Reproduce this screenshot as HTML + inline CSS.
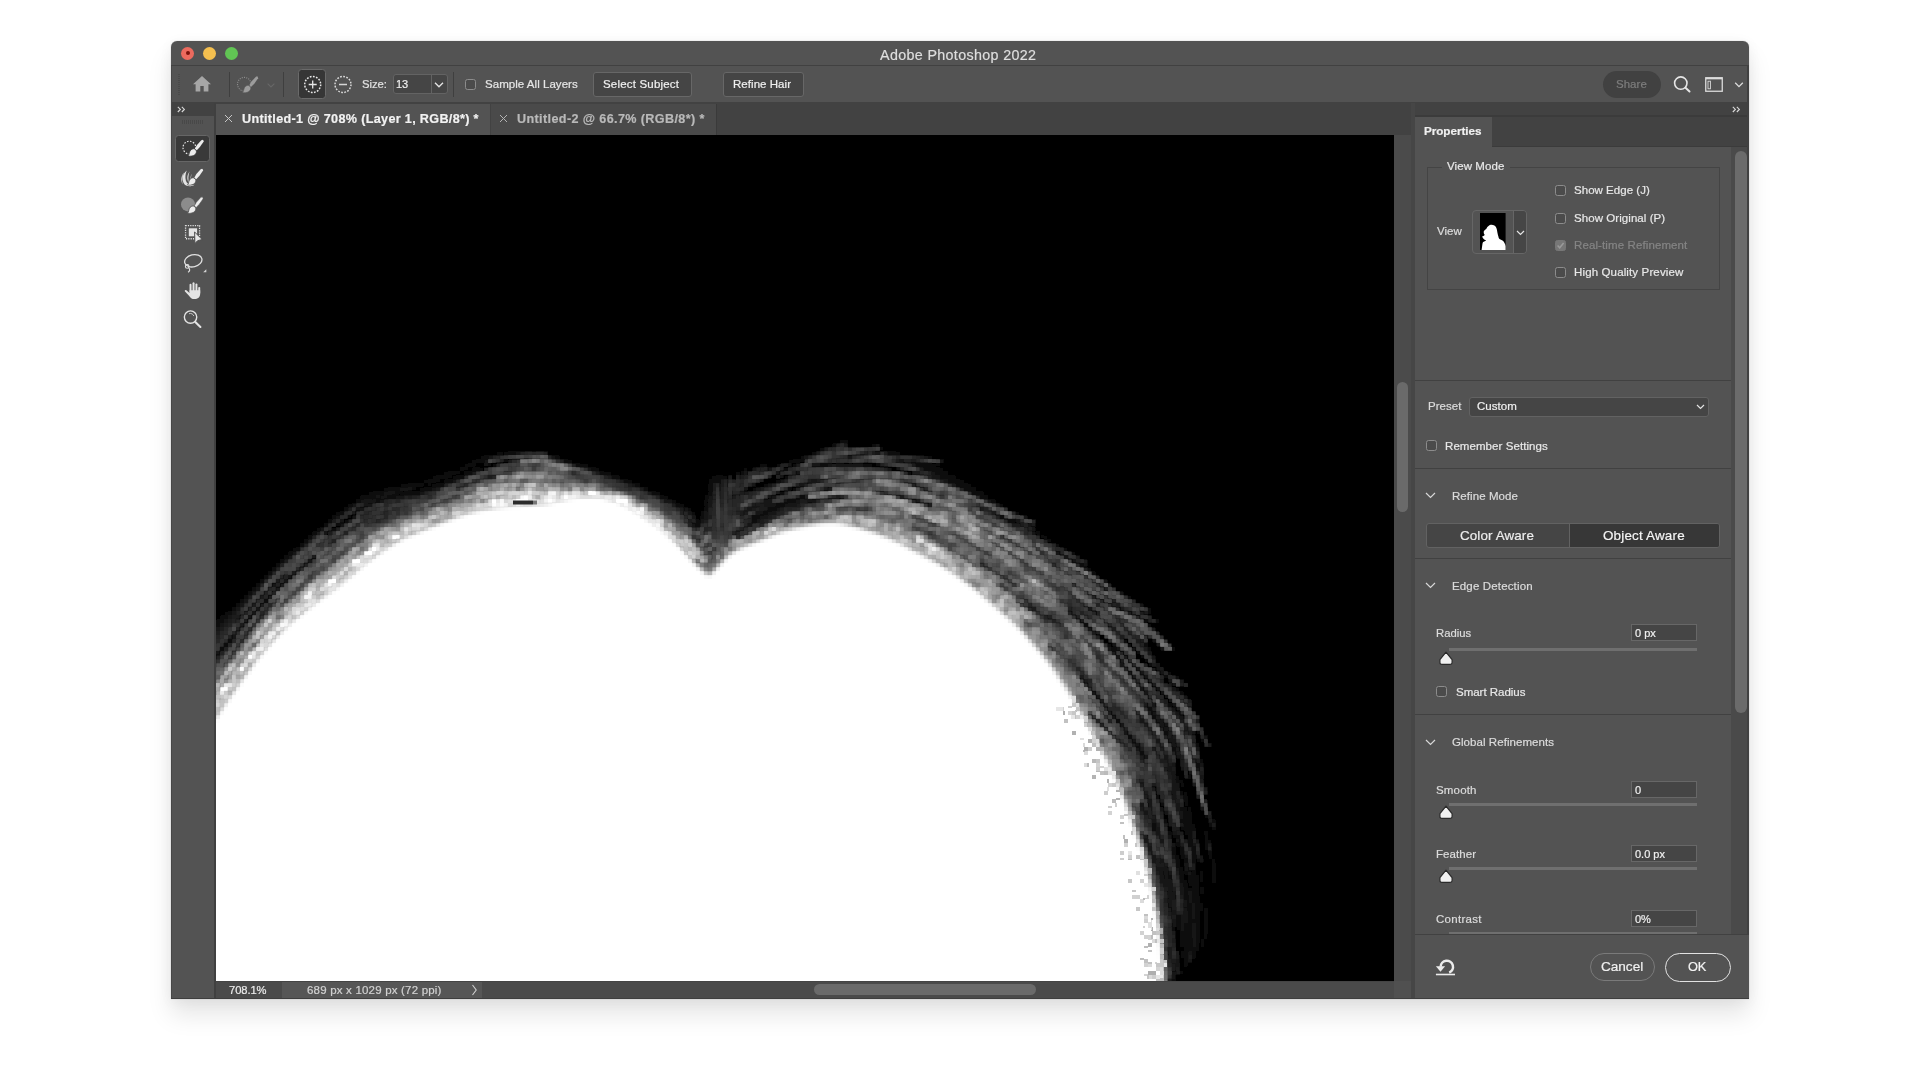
<!DOCTYPE html>
<html><head><meta charset="utf-8">
<style>
*{box-sizing:border-box;margin:0;padding:0}
html,body{width:1920px;height:1080px;overflow:hidden;background:#fff;font-family:"Liberation Sans",sans-serif;}
.a{position:absolute}
#win{position:absolute;left:0;top:0;width:1920px;height:1080px;clip-path:inset(41px 171px 81px 171px round 6px 6px 0 0);color:#e4e4e4;font-size:11px;}
#bg{position:absolute;left:171px;top:41px;width:1578px;height:958px;background:#535353}
.sep{position:absolute;width:1px;background:#3f3f3f}
.btn{position:absolute;background:#454545;border:1px solid #676767;border-radius:3px}
.cb{position:absolute;width:11px;height:11px;border:1px solid #8c8c8c;border-radius:2.5px;background:#4b4b4b}
svg{position:absolute;overflow:visible}
#shadow{position:absolute;left:171px;top:41px;width:1578px;height:958px;border-radius:6px 6px 0 0;box-shadow:0 16px 24px rgba(0,0,0,.10),0 2px 14px rgba(0,0,0,.05),0 0 1px rgba(0,0,0,.4);}
.t{position:absolute;white-space:nowrap;line-height:1;will-change:transform;-webkit-text-stroke:0.2px currentColor}
</style><style>#title{font-size:14.3px!important;letter-spacing:0.344px!important;left:880.4px!important}#size{font-size:11.3px!important;letter-spacing:-0.031px!important;left:362.4px!important}#sal{font-size:11.5px!important;letter-spacing:0.041px!important;left:485.0px!important}#ss{font-size:11.5px!important;letter-spacing:0.191px!important;left:603.4px!important}#rh{font-size:11.5px!important;letter-spacing:0.047px!important;left:733.4px!important}#share{font-size:11.5px!important;letter-spacing:0.028px!important;left:1615.8px!important}#tab1{font-size:12.6px!important;letter-spacing:0.338px!important;left:241.9px!important}#tab2{font-size:12.6px!important;letter-spacing:0.377px!important;left:517.1px!important}#props{font-size:11.7px!important;letter-spacing:-0.046px!important;left:1424.0px!important}#vm{font-size:11.5px!important;letter-spacing:0.077px!important;left:1447.1px!important}#view{font-size:11.5px!important;letter-spacing:0.027px!important;left:1437.4px!important}#c1{font-size:11.5px!important;letter-spacing:0.03px!important;left:1574.1px!important}#c2{font-size:11.5px!important;letter-spacing:0.067px!important;left:1574.1px!important}#c3{font-size:11.5px!important;letter-spacing:0.11px!important;left:1574.1px!important}#c4{font-size:11.5px!important;letter-spacing:0.135px!important;left:1574.1px!important}#preset{font-size:11.5px!important;letter-spacing:0.03px!important;left:1428.3px!important}#custom{font-size:11.5px!important;letter-spacing:0.035px!important;left:1476.8px!important}#rem{font-size:11.5px!important;letter-spacing:0.073px!important;left:1445.1px!important}#rm{font-size:11.5px!important;letter-spacing:0.068px!important;left:1452.0px!important}#ca{font-size:13.4px!important;letter-spacing:0.12px!important;left:1459.8px!important}#oa{font-size:13.4px!important;letter-spacing:0.199px!important;left:1603.4px!important}#ed{font-size:11.5px!important;letter-spacing:0.151px!important;left:1452.0px!important}#radius{font-size:11.3px!important;letter-spacing:0.006px!important;left:1435.7px!important}#sr{font-size:11.5px!important;letter-spacing:-0.016px!important;left:1455.9px!important}#gr{font-size:11.5px!important;letter-spacing:0.059px!important;left:1452.0px!important}#smooth{font-size:11.5px!important;letter-spacing:0.172px!important;left:1435.9px!important}#feather{font-size:11.5px!important;letter-spacing:0.06px!important;left:1435.9px!important}#contrast{font-size:11.5px!important;letter-spacing:0.276px!important;left:1435.9px!important}#cancel{font-size:13.6px!important;letter-spacing:-0.026px!important;left:1600.7px!important}#ok{font-size:12.8px!important;letter-spacing:-0.3px!important;left:1688.0px!important}#zoomv{font-size:11.2px!important;letter-spacing:-0.091px!important;left:229.4px!important}#docinfo{font-size:11.5px!important;letter-spacing:0.192px!important;left:306.7px!important}</style></head><body>
<div id="shadow"></div>
<div id="win">
<div id="bg"></div>
<div class="a" style="left:171px;top:65px;width:1578px;height:1px;background:#414141"></div>
<div class="a" style="left:181px;top:46.5px;width:13px;height:13px;border-radius:50%;background:#ec6a5e"></div>
<div class="a" style="left:185.5px;top:51px;width:4px;height:4px;border-radius:50%;background:#7a120c"></div>
<div class="a" style="left:203px;top:46.5px;width:13px;height:13px;border-radius:50%;background:#f4bf4f"></div>
<div class="a" style="left:225px;top:46.5px;width:13px;height:13px;border-radius:50%;background:#61c554"></div>
<div class="t" id="title" style="left:881px;top:48px;font-size:14px;color:#dedede;letter-spacing:0.2px">Adobe Photoshop 2022</div>


<!-- grip -->
<div class="a" style="left:177.5px;top:74px;width:2px;height:21px;background:repeating-linear-gradient(to bottom,#494949 0 1px,transparent 1px 2px)"></div>
<!-- home -->
<svg style="left:192px;top:75px" width="20" height="18" viewBox="0 0 20 18"><path d="M10 1 L1 9.2 H3.6 V16.4 H8.3 V11 H11.7 V16.4 H16.4 V9.2 H19 Z" fill="#a6a6a6"/></svg>
<div class="sep" style="left:229px;top:72px;height:25px"></div>
<!-- brush tool preset (dim) -->
<svg style="left:236px;top:74px" width="24" height="22" viewBox="0 0 24 22"><circle cx="8.3" cy="10.2" r="6.8" fill="none" stroke="#8e8e8e" stroke-width="1.1" stroke-dasharray="1.1 1.15"/><g transform="translate(-.6,.6)"><path d="M20.3 2.3 Q22.5 0.5 22.7 3.6 L18.9 9.1 L15.8 12.2 L13.9 10.7 L16 7 Z" fill="#9c9c9c"/><path d="M15.2 12.5 C16 14.5 14.6 17 11.6 17.8 C9.8 18.3 8 18.3 7.1 17.8 C8.4 16.7 8.2 14.8 9 13.2 C9.8 11.4 12 10.4 13.5 10.9 Z" fill="#9c9c9c" stroke="#535353" stroke-width=".6"/></g></svg>
<svg style="left:266.5px;top:83px" width="8" height="5" viewBox="0 0 8 5"><path d="M0.6 0.6 L4 4 L7.4 0.6" fill="none" stroke="#666" stroke-width="1.2"/></svg>
<div class="sep" style="left:283px;top:72px;height:25px"></div>
<!-- add button selected -->
<div class="a" style="left:298px;top:69px;width:28px;height:30px;background:#363636;border:1px solid #6a6a6a;border-radius:3.5px"></div>
<svg style="left:303px;top:75px" width="20" height="20" viewBox="0 0 20 20"><circle cx="9.7" cy="9.5" r="8" fill="none" stroke="#e8e8e8" stroke-width="1.5" stroke-dasharray="1.75 1.39"/><path d="M5.7 9.5 H13.7 M9.7 5.5 V13.5" stroke="#e6e6e6" stroke-width="1.3"/></svg>
<svg style="left:333px;top:75px" width="20" height="20" viewBox="0 0 20 20"><circle cx="10" cy="9.5" r="8" fill="none" stroke="#dadada" stroke-width="1.5" stroke-dasharray="1.75 1.39"/><path d="M6 9.5 H14" stroke="#d6d6d6" stroke-width="1.3"/></svg>
<div class="t" style="left:363px;top:79px;font-size:11px;color:#e2e2e2" id="size">Size:</div>
<div class="btn" style="left:392.5px;top:74px;width:55.5px;height:20px;border-color:#636363;background:#454545"></div>
<div class="a" style="left:431px;top:75px;width:1px;height:18px;background:#636363"></div>
<div class="t" style="left:396px;top:79px;font-size:11px;color:#efefef">13</div>
<svg style="left:434px;top:82px" width="10" height="6" viewBox="0 0 10 6"><path d="M1 0.8 L5 4.8 L9 0.8" fill="none" stroke="#e0e0e0" stroke-width="1.4"/></svg>
<div class="sep" style="left:453px;top:72px;height:25px"></div>
<div class="cb" style="left:465px;top:79px"></div>
<div class="t" id="sal" style="left:485px;top:79px;font-size:11px;color:#e6e6e6">Sample All Layers</div>
<div class="btn" style="left:593px;top:72px;width:99px;height:25px"></div>
<div class="t" id="ss" style="left:604px;top:79px;font-size:11px;color:#f0f0f0">Select Subject</div>
<div class="btn" style="left:723px;top:72px;width:81px;height:25px"></div>
<div class="t" id="rh" style="left:734px;top:79px;font-size:11px;color:#f0f0f0">Refine Hair</div>
<!-- right side -->
<div class="a" style="left:1602.5px;top:71px;width:58.5px;height:26.5px;border-radius:13.5px;background:#414141"></div>
<div class="t" id="share" style="left:1617px;top:79px;font-size:11px;color:#7d7d7d">Share</div>
<svg style="left:1673px;top:75px" width="20" height="20" viewBox="0 0 20 20"><circle cx="7.8" cy="8.1" r="6.2" fill="none" stroke="#e6e6e6" stroke-width="1.6"/><path d="M12.5 12.8 L16.5 16.5" stroke="#e6e6e6" stroke-width="2" stroke-linecap="round"/></svg>
<svg style="left:1705px;top:77px" width="18" height="15" viewBox="0 0 18 15"><rect x="0.75" y="0.75" width="16.5" height="13.5" fill="none" stroke="#dcdcdc" stroke-width="1.3"/><rect x="0.75" y="0.75" width="16.5" height="1.6" fill="#dcdcdc"/><rect x="3" y="4.2" width="2.4" height="7.6" fill="none" stroke="#dcdcdc" stroke-width="0.9"/></svg>
<svg style="left:1733.6px;top:82px" width="10" height="6" viewBox="0 0 10 6"><path d="M1.2 0.8 L5 4.6 L8.8 0.8" fill="none" stroke="#dcdcdc" stroke-width="1.3"/></svg>


<!-- below-options line -->
<div class="a" style="left:171px;top:102px;width:1578px;height:1px;background:#424242"></div>
<div class="a" style="left:171px;top:103px;width:43px;height:13px;background:#424242"></div>
<svg style="left:177px;top:106px" width="9" height="7" viewBox="0 0 9 7"><path d="M0.8 0.8 L3.4 3.4 L0.8 6 M4.8 0.8 L7.4 3.4 L4.8 6" fill="none" stroke="#dadada" stroke-width="1.1"/></svg>
<div class="a" style="left:213.5px;top:103px;width:2.5px;height:896px;background:#404040"></div><div class="a" style="left:171px;top:66px;width:1px;height:933px;background:#474747"></div>
<div class="a" style="left:182px;top:120px;width:22px;height:4px;background:repeating-linear-gradient(to right,#484848 0 1px,transparent 1px 2px)"></div>
<div class="a" style="left:175px;top:135px;width:35px;height:27px;background:#393939;border:1px solid #666;border-radius:3.5px"></div>
<!-- quick selection brush -->
<svg style="left:181px;top:138px" width="24" height="20" viewBox="0 0 24 20"><circle cx="8.4" cy="9.6" r="6.4" fill="none" stroke="#e6e6e6" stroke-width="1.2" stroke-dasharray="1.5 1.5"/><path d="M20.3 2.3 Q22.5 0.5 22.7 3.6 L18.9 9.1 L15.8 12.2 L13.9 10.7 L16 7 Z" fill="#ececec"/><path d="M15.2 12.5 C16 14.5 14.6 17 11.6 17.8 C9.8 18.3 8 18.3 7.1 17.8 C8.4 16.7 8.2 14.8 9 13.2 C9.8 11.4 12 10.4 13.5 10.9 Z" fill="#ececec" stroke="#393939" stroke-width=".7"/></svg>
<!-- refine edge brush -->
<svg style="left:180px;top:166px" width="24" height="22" viewBox="0 0 24 22"><path d="M6.8 4.6 C2.2 8 1.2 14 4.6 18.6 C7 20.8 11.4 20.8 14.6 18.8 C10.2 19.6 6.8 18 5.9 14.8 C4.9 11 5.5 7.6 6.8 4.6 Z M9.6 5.6 C6.8 9.2 6.6 13.6 9 17 C8 13.2 8.2 9.4 9.6 5.6 Z M4 6.6 C1.2 10 .4 14.6 2.6 18.4 C1.6 14.2 2.2 10.2 4 6.6 Z M11.8 7.6 C10.4 10 10.2 12.6 11.2 15 C10.8 12.4 11 10 11.8 7.6 Z" fill="#e2e2e2"/><g transform="translate(.4,1)"><path d="M20.3 2.3 Q22.5 0.5 22.7 3.6 L18.9 9.1 L15.8 12.2 L13.9 10.7 L16 7 Z" fill="#ececec"/><path d="M15.2 12.5 C16 14.5 14.6 17 11.6 17.8 C9.8 18.3 8 18.3 7.1 17.8 C8.4 16.7 8.2 14.8 9 13.2 C9.8 11.4 12 10.4 13.5 10.9 Z" fill="#ececec" stroke="#535353" stroke-width=".8"/></g></svg>
<!-- brush tool -->
<svg style="left:180px;top:194px" width="24" height="22" viewBox="0 0 24 22"><circle cx="8" cy="10.4" r="7" fill="#8c8c8c"/><g transform="translate(.4,1.2)"><path d="M20.3 2.3 Q22.5 0.5 22.7 3.6 L18.9 9.1 L15.8 12.2 L13.9 10.7 L16 7 Z" fill="#ececec" stroke="#535353" stroke-width=".5"/><path d="M15.2 12.5 C16 14.5 14.6 17 11.6 17.8 C9.8 18.3 8 18.3 7.1 17.8 C8.4 16.7 8.2 14.8 9 13.2 C9.8 11.4 12 10.4 13.5 10.9 Z" fill="#ececec" stroke="#535353" stroke-width=".9"/></g></svg>
<!-- object selection -->
<svg style="left:184px;top:224px" width="20" height="20" viewBox="0 0 20 20"><rect x="1.55" y="1.55" width="14" height="13.2" fill="none" stroke="#e0e0e0" stroke-width="1.3" stroke-dasharray="1.2 1.13"/><rect x="4.8" y="4.3" width="8.3" height="8" fill="#e4e4e4"/><path d="M10.6 8 L10.9 19.6 L13.6 16.7 L18.2 15.5 Z" fill="#e8e8e8" stroke="#505050" stroke-width="1"/></svg>
<!-- lasso -->
<svg style="left:182px;top:252px" width="26" height="24" viewBox="0 0 26 24"><ellipse cx="11.3" cy="8.8" rx="8.8" ry="6" transform="rotate(-14 11.3 8.8)" fill="none" stroke="#e0e0e0" stroke-width="1.3"/><circle cx="5.2" cy="14.4" r="1.8" fill="none" stroke="#e0e0e0" stroke-width="1.1"/><path d="M6.6 15.6 C8.2 17 8 19.4 6 20.2" fill="none" stroke="#e0e0e0" stroke-width="1.2"/><path d="M24.3 17.2 V20.3 H21.2 Z" fill="#d4d4d4"/></svg>
<!-- hand -->
<svg style="left:184px;top:281px" width="18" height="19" viewBox="0 0 18 19"><g fill="#e4e4e4"><rect x="5.55" y="2.7" width="1.95" height="9" rx=".95"/><rect x="8.55" y="1.3" width="1.95" height="10" rx=".95"/><rect x="11.45" y="2.5" width="1.95" height="9" rx=".95"/><rect x="14.25" y="5.9" width="1.95" height="7" rx=".95"/><path d="M5.55 9.3 H16.2 V12.4 C16.2 16 13.8 18.1 10.6 18.1 C7.8 18.1 6.2 16.7 5 14.7 L1 10.5 C0.2 9.5 1.4 8.5 2.4 9.3 L5.55 11.9 Z"/></g></svg>
<!-- zoom -->
<svg style="left:182px;top:308px" width="22" height="22" viewBox="0 0 22 22"><circle cx="8.55" cy="9.05" r="6.2" fill="none" stroke="#e4e4e4" stroke-width="1.4"/><path d="M13.3 14 L18.4 19" stroke="#e4e4e4" stroke-width="2.1" stroke-linecap="round"/><path d="M7 5.7 C9.4 5 11.2 6.2 11.8 8" fill="none" stroke="#c4c4c4" stroke-width="1"/></svg>
<div class="a" style="left:216px;top:103px;width:1196px;height:32px;background:#424242"></div>
<div class="a" style="left:216px;top:104px;width:274px;height:31px;background:#535353"></div>
<div class="a" style="left:491px;top:104px;width:225px;height:31px;background:#4a4a4a"></div>
<div class="a" style="left:716px;top:104px;width:1px;height:31px;background:#3a3a3a"></div>
<svg style="left:224px;top:114px" width="9" height="9" viewBox="0 0 9 9"><path d="M1 1 L8 8 M8 1 L1 8" stroke="#c8c8c8" stroke-width="1"/></svg>
<div class="t" id="tab1" style="left:242px;top:113px;font-size:12px;font-weight:bold;color:#f2f2f2">Untitled-1 @ 708% (Layer 1, RGB/8*) *</div>
<svg style="left:499px;top:114px" width="9" height="9" viewBox="0 0 9 9"><path d="M1 1 L8 8 M8 1 L1 8" stroke="#b4b4b4" stroke-width="1"/></svg>
<div class="t" id="tab2" style="left:517px;top:113px;font-size:12px;font-weight:bold;color:#b9b9b9">Untitled-2 @ 66.7% (RGB/8*) *</div>

<svg style="left:216px;top:135px;overflow:hidden" width="1178" height="846" viewBox="216 135 1178 846">
<defs><filter id="b3" x="-5%" y="-5%" width="110%" height="110%"><feGaussianBlur stdDeviation="3"/></filter><filter id="b1" x="-5%" y="-5%" width="110%" height="110%"><feGaussianBlur stdDeviation="1.2"/></filter><filter id="b2" x="-5%" y="-5%" width="110%" height="110%"><feGaussianBlur stdDeviation="2.2"/></filter>
<filter id="nz" x="0" y="0" width="100%" height="100%" color-interpolation-filters="sRGB"><feTurbulence type="fractalNoise" baseFrequency="0.095" numOctaves="2" seed="5"/><feColorMatrix type="matrix" values="1 0 0 0 0 1 0 0 0 0 1 0 0 0 0 0 0 0 0 1" result="n"/><feComposite in="SourceGraphic" in2="n" operator="arithmetic" k1="1.0" k2="0.5" k3="0" k4="0"/></filter>
<filter id="px" x="0" y="0" width="100%" height="100%" filterUnits="objectBoundingBox" primitiveUnits="userSpaceOnUse"><feFlood x="217" y="136" width="2" height="2"/><feComposite width="4" height="4"/><feTile result="t"/><feComposite in="SourceGraphic" in2="t" operator="in"/><feMorphology operator="dilate" radius="1"/></filter></defs>
<rect x="216" y="135" width="1178" height="846" fill="#000"/>
<g filter="url(#px)"><rect x="216" y="135" width="1178" height="846" fill="#000"/>
<g filter="url(#nz)"><rect x="216" y="135" width="1178" height="846" fill="#000"/>
<g filter="url(#b3)">
<path d="M453 478L468 471L468 464L453 471ZM468 471L483 464L483 457L468 464ZM483 464L498 461L498 453L483 457ZM581 470L592 474L593 471L583 466ZM701 531L706 506L707 496L702 525ZM706 506L711 482L711 466L707 496ZM711 482L717 480L717 465L711 466ZM717 480L722 478L722 464L717 465ZM722 489L728 486L729 473L722 474ZM728 486L735 484L735 471L729 473ZM735 484L745 480L745 467L735 471ZM745 480L756 476L755 464L745 467ZM756 476L769 473L767 461L755 464ZM769 473L782 469L779 458L767 461ZM782 469L799 466L798 455L779 458ZM799 466L817 463L816 452L798 455ZM817 463L834 462L833 450L816 452ZM1088 586L1100 597L1113 589L1101 578ZM1100 597L1112 608L1125 600L1113 589ZM1112 608L1122 619L1136 610L1125 600ZM1122 619L1133 630L1146 621L1136 610ZM1133 630L1143 648L1156 639L1146 621ZM1143 648L1153 665L1166 657L1156 639ZM1153 665L1163 680L1176 670L1166 657ZM1163 680L1173 694L1186 683L1176 670ZM1173 694L1180 708L1193 696L1186 683ZM1180 708L1187 722L1199 709L1193 696ZM1187 722L1190 742L1201 728L1199 709ZM1190 742L1192 762L1203 747L1201 728ZM1192 762L1196 785L1206 771L1203 747ZM1189 796L1193 819L1202 806L1198 782ZM1193 819L1197 842L1206 829L1202 806ZM1197 842L1201 865L1210 853L1206 829ZM1201 865L1201 886L1209 874L1210 853ZM1201 886L1200 907L1209 896L1209 874ZM1200 907L1198 931L1205 922L1209 896ZM1198 931L1195 955L1202 948L1205 922Z" fill="#060606"/>
<path d="M186 666L201 651L201 636L186 650ZM201 651L216 636L216 622L201 636ZM216 636L231 621L231 609L216 622ZM231 621L246 606L246 595L231 609ZM246 606L260 591L260 580L246 595ZM260 591L275 576L275 566L260 580ZM275 576L290 563L290 553L275 566ZM290 563L305 550L305 540L290 553ZM305 550L320 538L320 528L305 540ZM320 538L335 526L335 515L320 528ZM335 526L350 515L350 505L335 515ZM350 515L364 505L364 495L350 505ZM364 505L379 500L379 491L364 495ZM379 500L394 495L394 487L379 491ZM394 495L408 492L408 485L394 487ZM408 492L423 490L423 483L408 485ZM423 490L438 484L438 477L423 483ZM438 484L453 478L453 471L438 477ZM592 474L607 479L608 476L593 471ZM607 479L622 484L623 482L608 476ZM622 484L638 491L640 488L623 482ZM638 491L654 498L656 495L640 488ZM654 498L670 506L672 503L656 495ZM670 506L686 514L688 510L672 503ZM686 514L694 522L695 518L688 510ZM694 522L701 531L702 525L695 518ZM700 535L706 514L706 504L701 530ZM706 514L711 494L711 478L706 504ZM711 494L716 491L717 476L711 478ZM716 491L722 489L722 474L717 476ZM834 462L851 460L850 448L833 450ZM851 460L870 462L870 449L850 448ZM870 462L889 463L890 450L870 449ZM889 463L909 470L910 457L890 450ZM909 470L928 477L931 463L910 457ZM928 477L949 489L953 476L931 463ZM949 489L970 500L975 488L953 476ZM970 500L991 515L998 503L975 488ZM991 515L1012 529L1020 518L998 503ZM1012 529L1034 545L1042 534L1020 518ZM1034 545L1055 560L1064 551L1042 534ZM1055 560L1071 573L1083 564L1064 551ZM1071 573L1088 586L1101 578L1083 564ZM1177 731L1181 752L1192 738L1190 719ZM1181 752L1185 773L1195 758L1192 738ZM1185 773L1189 796L1198 782L1195 758ZM1174 817L1179 839L1188 826L1184 803ZM1181 807L1186 829L1195 816L1191 793ZM1171 849L1175 871L1185 858L1181 836ZM1179 839L1183 861L1192 849L1188 826ZM1186 829L1190 852L1199 839L1195 816ZM1175 871L1179 892L1189 880L1185 858ZM1183 861L1187 883L1196 871L1192 849ZM1190 852L1194 874L1203 862L1199 839ZM1179 892L1180 913L1189 901L1189 880ZM1187 883L1187 904L1196 892L1196 871ZM1194 874L1194 895L1203 883L1203 862ZM1180 913L1181 933L1190 922L1189 901ZM1187 904L1188 925L1196 913L1196 892ZM1194 895L1194 916L1202 905L1203 883ZM1181 933L1180 952L1188 943L1190 922ZM1188 925L1186 945L1194 936L1196 913ZM1194 916L1192 938L1199 929L1202 905ZM1180 952L1180 970L1186 964L1188 943ZM1186 945L1185 965L1191 959L1194 936ZM1192 938L1190 960L1196 954L1199 929Z" fill="#0c0c0c"/>
<path d="M722 499L728 496L728 483L722 485ZM728 496L734 493L735 481L728 483ZM734 493L746 489L745 477L735 481ZM746 489L757 485L756 473L745 477ZM757 485L770 481L768 470L756 473ZM770 481L783 478L781 467L768 470ZM783 478L801 475L799 464L781 467ZM801 475L819 471L817 461L799 464ZM819 471L835 471L834 459L817 461ZM1090 603L1101 614L1115 606L1103 595ZM1101 614L1112 626L1126 617L1115 606ZM1112 626L1122 637L1136 628L1126 617ZM1122 637L1132 654L1146 646L1136 628ZM1132 654L1142 672L1156 663L1146 646ZM1142 672L1152 687L1166 677L1156 663ZM1152 687L1162 702L1176 691L1166 677ZM1162 702L1170 717L1183 705L1176 691ZM1170 717L1177 731L1190 719L1183 705ZM1177 784L1181 807L1191 793L1187 770ZM1159 838L1164 859L1174 846L1169 825ZM1166 828L1171 849L1181 836L1176 814ZM1157 869L1161 890L1170 877L1166 856ZM1164 859L1168 880L1178 868L1174 846ZM1161 890L1165 910L1174 898L1170 877ZM1168 880L1172 901L1182 889L1178 868ZM1165 910L1167 931L1176 919L1174 898ZM1172 901L1173 922L1182 910L1182 889ZM1167 931L1168 951L1177 939L1176 919ZM1173 922L1175 942L1183 931L1182 910ZM1168 951L1169 966L1176 957L1177 939ZM1175 942L1175 959L1182 950L1183 931ZM1169 966L1169 981L1176 974L1176 957ZM1175 959L1174 976L1181 969L1182 950Z" fill="#121212"/>
<path d="M705 523L710 506L711 490L706 512ZM710 506L716 502L716 488L711 490ZM716 502L722 499L722 485L716 488ZM835 471L851 470L850 457L834 459ZM1078 592L1090 603L1103 595L1091 584ZM1172 763L1177 784L1187 770L1184 749ZM1161 806L1166 828L1176 814L1171 792ZM1169 795L1174 817L1184 803L1179 781ZM1151 849L1157 869L1166 856L1161 835Z" fill="#181818"/>
<path d="M700 540L705 523L706 512L701 534ZM728 506L734 503L735 490L728 493ZM734 503L746 499L746 486L735 490ZM746 499L758 494L757 482L746 486ZM758 494L771 490L770 479L757 482ZM771 490L785 486L783 475L770 479ZM785 486L802 483L800 472L783 475ZM802 483L820 480L818 469L800 472ZM851 470L870 472L870 459L850 457ZM1063 580L1078 592L1091 584L1074 571ZM1091 621L1101 632L1115 624L1105 612ZM1101 632L1112 644L1126 635L1115 624ZM1112 644L1122 661L1136 652L1126 635ZM1122 661L1132 678L1146 670L1136 652ZM1132 678L1142 694L1156 685L1146 670ZM1142 694L1152 710L1166 699L1156 685ZM1152 710L1160 725L1173 714L1166 699ZM1160 725L1168 741L1180 728L1173 714ZM1168 741L1172 763L1184 749L1180 728ZM1164 773L1169 795L1179 781L1175 759ZM1153 818L1159 838L1169 825L1164 803Z" fill="#1e1e1e"/>
<path d="M186 678L201 662L201 647L186 662ZM201 662L216 646L216 633L201 647ZM216 646L231 630L231 618L216 633ZM231 630L246 614L246 603L231 618ZM246 614L260 599L260 588L246 603ZM260 599L275 584L275 573L260 588ZM275 584L290 570L290 560L275 573ZM290 570L305 557L305 548L290 560ZM305 557L320 546L320 535L305 548ZM320 546L335 534L335 523L320 535ZM335 534L350 523L350 513L335 523ZM350 523L364 512L364 503L350 513ZM364 512L379 506L379 498L364 503ZM379 506L394 501L394 493L379 498ZM394 501L408 498L408 491L394 493ZM408 498L423 495L423 488L408 491ZM423 495L438 489L438 482L423 488ZM438 489L453 483L453 476L438 482ZM453 483L468 476L468 469L453 476ZM692 526L700 535L701 530L694 521ZM716 514L722 510L722 496L716 499ZM722 510L728 506L728 493L722 496ZM728 517L734 513L734 500L728 503ZM734 513L747 508L746 496L734 500ZM747 508L759 503L758 491L746 496ZM759 503L773 499L771 487L758 491ZM773 499L786 495L784 484L771 487ZM786 495L804 491L802 480L784 484ZM804 491L821 488L819 477L802 480ZM820 480L836 479L835 468L818 469ZM870 472L889 474L890 460L870 459ZM889 474L907 481L909 467L890 460ZM907 481L926 488L929 474L909 467ZM926 488L946 499L950 486L929 474ZM946 499L966 510L971 497L950 486ZM966 510L987 524L993 512L971 497ZM987 524L1007 537L1014 527L993 512ZM1007 537L1027 553L1036 542L1014 527ZM1027 553L1047 568L1057 558L1036 542ZM1047 568L1063 580L1074 571L1057 558ZM1080 609L1091 621L1105 612L1093 601ZM1081 627L1091 639L1105 630L1094 619ZM1091 639L1101 651L1115 642L1105 630ZM1101 651L1111 668L1125 659L1115 642ZM1111 668L1121 685L1135 676L1125 659ZM1121 685L1132 702L1145 692L1135 676ZM1132 702L1142 718L1155 707L1145 692ZM1142 718L1150 734L1163 723L1155 707ZM1150 734L1158 751L1171 738L1163 723ZM1158 751L1164 773L1175 759L1171 738ZM1146 794L1153 818L1164 803L1158 780ZM1155 783L1161 806L1171 792L1166 770ZM1146 829L1151 849L1161 835L1156 814Z" fill="#242424"/>
<path d="M186 690L201 673L201 658L186 674ZM201 673L216 656L216 643L201 658ZM216 656L231 639L231 627L216 643ZM231 639L246 622L246 612L231 627ZM246 622L260 607L260 596L246 612ZM260 607L275 591L275 581L260 596ZM275 591L290 578L290 568L275 581ZM290 578L305 565L305 555L290 568ZM305 565L320 553L320 543L305 555ZM320 553L335 542L335 531L320 543ZM335 542L350 531L350 521L335 531ZM350 531L364 519L364 510L350 521ZM364 519L379 513L379 504L364 510ZM379 513L394 507L394 499L379 504ZM394 507L408 503L408 496L394 499ZM408 503L423 500L423 493L408 496ZM423 500L438 494L438 487L423 493ZM438 494L453 488L453 481L438 487ZM699 544L705 531L705 520L700 538ZM704 539L710 529L710 514L705 528ZM705 531L710 517L711 502L705 520ZM710 529L716 525L716 510L710 514ZM710 517L716 514L716 499L711 502ZM716 525L721 521L722 507L716 510ZM721 531L728 527L728 514L722 517ZM721 521L728 517L728 503L722 507ZM728 527L734 522L734 510L728 514ZM734 522L747 517L746 505L734 510ZM747 517L760 512L759 500L746 505ZM760 512L774 508L772 496L759 500ZM774 508L788 503L786 492L772 496ZM788 503L805 500L803 489L786 492ZM805 500L822 496L821 485L803 489ZM821 488L837 488L836 477L819 477ZM1070 615L1081 627L1094 619L1083 607ZM1149 760L1155 783L1166 770L1161 748ZM1138 804L1146 829L1156 814L1149 791Z" fill="#2a2a2a"/>
<path d="M453 488L468 482L468 475L453 481ZM468 476L483 470L483 462L468 469ZM606 481L621 486L622 483L607 478ZM621 486L637 493L638 490L622 483ZM637 493L653 500L654 497L638 490ZM653 500L669 509L670 505L654 497ZM669 509L684 517L687 513L670 505ZM684 517L692 526L694 521L687 513ZM699 548L704 539L705 528L700 543ZM704 547L710 541L710 526L705 536ZM710 541L716 536L716 521L710 526ZM716 536L721 531L722 517L716 521ZM721 542L727 537L728 524L721 528ZM727 537L733 532L734 519L728 524ZM733 532L747 527L747 514L734 519ZM747 527L761 521L760 509L747 514ZM761 521L775 516L773 505L760 509ZM775 516L789 511L787 500L773 505ZM789 511L806 508L805 497L787 500ZM806 508L824 505L822 494L805 497ZM822 496L838 497L837 486L821 485ZM836 479L852 479L851 467L835 468ZM1068 598L1080 609L1093 601L1081 590ZM1070 633L1081 646L1094 637L1084 625ZM1081 646L1091 658L1105 649L1094 637ZM1091 658L1101 675L1115 666L1105 649ZM1101 675L1111 691L1125 683L1115 666ZM1111 691L1121 709L1135 699L1125 683ZM1121 709L1131 726L1145 716L1135 699ZM1131 726L1140 743L1153 732L1145 716ZM1140 743L1149 760L1161 748L1153 732ZM1139 770L1146 794L1158 780L1152 757Z" fill="#303030"/>
<path d="M186 702L201 684L201 670L186 686ZM201 684L216 666L216 653L201 670ZM216 666L231 649L231 636L216 653ZM231 649L246 631L246 620L231 636ZM246 631L260 615L260 604L246 620ZM260 615L275 599L275 589L260 604ZM275 599L290 586L290 576L275 589ZM290 586L305 572L305 563L290 576ZM305 572L320 561L320 551L305 563ZM320 561L335 550L335 539L320 551ZM335 550L350 538L350 528L335 539ZM350 538L364 527L364 517L350 528ZM364 527L379 520L379 511L364 517ZM379 520L394 513L394 505L379 511ZM394 513L408 509L408 502L394 505ZM408 509L423 505L423 498L408 502ZM423 505L438 499L438 492L423 498ZM438 499L453 493L453 486L438 492ZM453 493L468 487L468 480L453 486ZM468 482L483 475L483 468L468 475ZM483 470L498 467L498 459L483 462ZM591 477L606 481L607 478L592 473ZM691 530L700 540L701 534L693 525ZM698 553L704 547L705 536L699 547ZM704 555L709 553L710 537L704 544ZM709 553L715 548L716 533L710 537ZM715 548L721 542L721 528L716 533ZM824 505L839 506L837 494L822 494ZM837 488L853 489L852 476L836 477ZM1058 604L1070 615L1083 607L1071 596ZM1059 622L1070 633L1084 625L1073 614ZM1060 639L1070 652L1084 644L1074 631ZM1070 652L1080 665L1094 656L1084 644ZM1080 665L1090 682L1104 673L1094 656ZM1090 682L1100 698L1114 689L1104 673ZM1100 698L1111 716L1124 707L1114 689ZM1111 716L1121 734L1135 724L1124 707ZM1121 734L1130 752L1143 740L1135 724ZM1130 752L1139 770L1152 757L1143 740ZM1130 780L1138 804L1149 791L1142 767Z" fill="#363636"/>
<path d="M186 714L201 696L201 681L186 698ZM201 696L216 677L216 663L201 681ZM216 677L231 658L231 646L216 663ZM231 658L246 639L246 628L231 646ZM246 639L260 623L260 612L246 628ZM260 623L275 607L275 596L260 612ZM275 607L290 593L290 583L275 596ZM290 593L305 580L305 570L290 583ZM305 580L320 569L320 559L305 570ZM320 569L335 558L335 547L320 559ZM335 558L350 546L350 536L335 547ZM350 546L364 534L364 524L350 536ZM364 534L379 526L379 518L364 524ZM379 526L394 518L394 511L379 518ZM394 518L408 514L408 507L394 511ZM408 514L423 510L423 503L408 507ZM423 510L438 504L438 497L423 503ZM438 504L453 498L453 491L438 497ZM580 474L591 477L592 473L581 469ZM698 557L704 555L704 544L699 551ZM703 563L709 565L710 549L704 553ZM709 565L715 559L715 544L710 549ZM715 559L721 553L721 539L715 544ZM721 553L727 547L727 534L721 539ZM727 547L733 542L734 529L727 534ZM733 542L748 536L747 524L734 529ZM748 536L762 530L761 518L747 524ZM762 530L776 525L775 514L761 518ZM776 525L791 520L789 509L775 514ZM791 520L808 516L806 505L789 509ZM808 516L825 513L823 502L806 505ZM838 497L853 498L852 486L837 486ZM852 479L870 482L870 469L851 467ZM1054 587L1068 598L1081 590L1065 578ZM1048 610L1059 622L1073 614L1061 602ZM1049 628L1060 639L1074 631L1063 620ZM1050 646L1060 659L1073 650L1063 637ZM1060 659L1070 672L1084 663L1073 650ZM1070 672L1080 688L1094 679L1084 663ZM1080 688L1090 705L1104 696L1094 679ZM1090 705L1100 723L1114 714L1104 696ZM1100 723L1111 742L1124 732L1114 714ZM1111 742L1120 761L1133 749L1124 732ZM1120 761L1130 780L1142 767L1133 749ZM1150 880L1154 900L1163 887L1159 866ZM1154 900L1158 919L1167 908L1163 887ZM1158 919L1160 939L1169 928L1167 908ZM1160 939L1162 959L1170 948L1169 928ZM1162 959L1163 973L1171 964L1170 948ZM1163 973L1164 986L1171 979L1171 964Z" fill="#3c3c3c"/>
<path d="M453 498L468 492L468 485L453 491ZM468 487L483 481L483 473L468 480ZM483 475L498 472L498 465L483 468ZM498 467L512 464L512 456L498 459ZM568 471L580 474L581 469L571 466ZM590 479L605 483L606 480L591 476ZM605 483L620 488L621 485L606 480ZM620 488L636 495L637 492L621 485ZM636 495L651 502L653 499L637 492ZM651 502L667 511L669 508L653 499ZM667 511L683 520L685 516L669 508ZM683 520L691 530L693 525L685 516ZM690 534L699 544L700 538L692 529ZM697 561L703 563L704 553L698 556ZM825 513L840 515L838 503L823 502ZM839 506L854 508L853 495L837 494ZM853 489L870 492L870 479L852 476ZM1045 593L1058 604L1071 596L1057 585ZM1039 634L1050 646L1063 637L1052 626Z" fill="#424242"/>
<path d="M512 464L526 463L526 456L512 456ZM526 463L540 463L540 455L526 456ZM540 463L554 467L555 460L540 455ZM554 467L568 471L571 466L555 460ZM578 477L590 479L591 476L580 473ZM853 498L870 502L870 489L852 486ZM870 482L888 484L889 470L870 469ZM1040 575L1054 587L1065 578L1049 566ZM1036 600L1048 610L1061 602L1048 591ZM1038 616L1049 628L1063 620L1051 608ZM1144 860L1150 880L1159 866L1154 846Z" fill="#484848"/>
<path d="M468 492L483 486L483 479L468 485ZM483 481L498 478L498 471L483 473ZM498 472L512 470L512 462L498 465ZM566 475L578 477L580 473L569 470ZM589 482L604 485L605 483L591 478ZM604 485L619 489L620 487L605 483ZM619 489L635 497L636 494L620 487ZM635 497L650 504L652 502L636 494ZM650 504L666 514L668 510L652 502ZM666 514L681 523L683 519L668 510ZM681 523L690 534L692 529L683 519ZM689 537L699 548L700 543L691 532ZM840 515L854 517L854 505L838 503ZM854 508L870 512L870 499L853 495ZM870 492L887 495L888 481L870 479ZM888 484L906 491L908 478L889 470ZM906 491L924 499L927 485L908 478ZM924 499L943 509L947 496L927 485ZM943 509L963 519L968 507L947 496ZM963 519L982 532L988 521L968 507ZM982 532L1001 546L1009 535L988 521ZM1001 546L1020 561L1029 550L1009 535ZM1020 561L1040 575L1049 566L1029 550ZM1032 583L1045 593L1057 585L1042 573ZM1028 622L1039 634L1052 626L1041 614Z" fill="#4e4e4e"/>
<path d="M512 470L526 469L526 461L512 462ZM526 469L540 469L540 461L526 461ZM540 469L553 472L554 465L540 461ZM553 472L566 475L569 470L554 465ZM577 481L589 482L591 478L579 476ZM870 502L887 505L888 491L870 489ZM887 495L905 502L907 488L888 481ZM905 502L922 509L925 495L907 488ZM922 509L941 519L944 506L925 495ZM941 519L959 529L964 516L944 506ZM959 529L977 541L983 530L964 516ZM977 541L996 554L1003 543L983 530ZM996 554L1014 569L1022 558L1003 543ZM1014 569L1032 583L1042 573L1022 558ZM1024 591L1036 600L1048 591L1034 581ZM1028 607L1038 616L1051 608L1039 598Z" fill="#545454"/>
<path d="M186 726L201 707L201 692L186 711ZM201 707L216 687L216 674L201 692ZM216 687L231 667L231 655L216 674ZM231 667L246 647L246 636L231 655ZM246 647L260 631L260 620L246 636ZM260 631L275 614L275 604L260 620ZM275 614L290 601L290 591L275 604ZM290 601L305 588L305 578L290 591ZM305 588L320 577L320 566L305 578ZM320 577L335 565L335 555L320 566ZM335 565L350 553L350 543L335 555ZM350 553L364 541L364 532L350 543ZM364 541L379 533L379 524L364 532ZM379 533L394 524L394 517L379 524ZM394 524L408 520L408 512L394 517ZM408 520L423 515L423 508L408 512ZM423 515L438 509L438 502L423 508ZM438 509L453 503L453 496L438 502ZM483 486L498 484L498 476L483 479ZM498 478L512 476L512 468L498 471ZM565 480L577 481L579 476L567 474ZM854 517L870 522L870 509L854 505ZM887 505L904 513L905 499L888 491ZM904 513L920 520L923 506L905 499ZM920 520L938 529L941 516L923 506ZM938 529L955 538L960 526L941 516ZM955 538L972 550L979 539L960 526ZM972 550L990 562L997 551L979 539ZM990 562L1007 576L1016 566L997 551ZM1007 576L1024 591L1034 581L1016 566ZM1019 614L1028 622L1041 614L1030 605ZM1138 840L1144 860L1154 846L1148 825Z" fill="#5a5a5a"/>
<path d="M512 476L526 475L526 467L512 468ZM526 475L540 475L540 467L526 467ZM540 475L552 477L554 470L540 467ZM552 477L565 480L567 474L554 470ZM588 484L603 488L604 485L590 481ZM603 488L618 491L619 489L604 485ZM618 491L633 499L635 496L619 489ZM633 499L649 507L651 504L635 496ZM649 507L664 516L666 513L651 504ZM664 516L680 526L682 522L666 513ZM680 526L689 537L691 532L682 522ZM870 512L886 516L887 502L870 499ZM1017 598L1028 607L1039 598L1027 588Z" fill="#606060"/>
<path d="M453 503L468 497L468 490L453 496ZM498 484L512 481L512 474L498 476ZM563 484L576 484L577 480L565 478ZM576 484L588 484L590 481L577 480ZM688 541L698 553L699 547L690 536ZM870 522L886 526L886 512L870 509ZM886 516L902 523L904 509L887 502ZM902 523L919 530L921 517L904 509ZM919 530L935 539L939 526L921 517ZM935 539L951 548L956 535L939 526ZM951 548L968 559L974 547L956 535ZM968 559L984 571L992 560L974 547ZM984 571L1001 584L1009 574L992 560ZM1001 584L1017 598L1027 588L1009 574ZM1009 606L1019 614L1030 605L1019 596ZM1129 815L1138 840L1148 825L1140 801Z" fill="#666666"/>
<path d="M512 481L526 481L526 473L512 474ZM526 481L540 480L540 473L526 473ZM540 480L551 482L553 475L540 473ZM551 482L563 484L565 478L553 475Z" fill="#6c6c6c"/>
<path d="M468 497L483 492L483 485L468 490ZM886 526L901 534L903 520L886 512ZM901 534L917 541L919 527L903 520ZM917 541L932 549L936 536L919 527ZM932 549L947 557L952 545L936 536ZM947 557L963 568L969 556L952 545ZM963 568L979 579L986 568L969 556ZM979 579L994 592L1003 582L986 568ZM994 592L1009 606L1019 596L1003 582Z" fill="#727272"/>
<path d="M703 571L709 577L709 561L703 561ZM709 577L715 570L715 555L709 561ZM1121 790L1129 815L1140 801L1133 777Z" fill="#787878"/>
<path d="M483 492L498 490L498 482L483 485ZM602 490L617 493L618 491L603 487ZM617 493L632 501L634 498L618 491ZM632 501L648 509L649 506L634 498ZM648 509L663 519L665 516L649 506ZM663 519L678 529L680 525L665 516ZM678 529L688 541L690 536L680 525ZM687 545L698 557L699 551L689 540ZM697 566L703 571L703 561L698 560ZM715 570L721 564L721 550L715 555Z" fill="#7e7e7e"/>
<path d="M588 487L602 490L603 487L589 483ZM1039 652L1049 666L1063 657L1053 644ZM1049 666L1059 679L1073 670L1063 657ZM1059 679L1069 695L1083 686L1073 670ZM1069 695L1079 711L1093 702L1083 686ZM1079 711L1090 731L1104 721L1093 702ZM1090 731L1100 750L1114 740L1104 721ZM1100 750L1110 770L1123 758L1114 740ZM1110 770L1121 790L1133 777L1123 758Z" fill="#848484"/>
<path d="M574 487L588 487L589 483L576 483ZM686 548L697 561L698 556L688 544ZM1029 640L1039 652L1053 644L1042 632Z" fill="#8a8a8a"/>
<path d="M498 490L512 487L512 480L498 482ZM561 488L574 487L576 483L563 482ZM721 564L727 558L727 544L721 550ZM1018 628L1029 640L1042 632L1032 620Z" fill="#909090"/>
<path d="M512 487L526 487L526 479L512 480ZM526 487L540 486L540 479L526 479ZM540 486L551 487L552 481L540 479ZM551 487L561 488L563 482L552 481Z" fill="#969696"/>
<path d="M601 492L616 495L617 492L603 489ZM616 495L631 503L633 500L617 492ZM631 503L646 511L648 508L633 500ZM646 511L662 522L663 518L648 508ZM662 522L677 532L679 528L663 518ZM677 532L687 545L689 540L679 528ZM727 558L733 552L733 539L727 544ZM1010 621L1018 628L1032 620L1022 612Z" fill="#9c9c9c"/>
<path d="M186 739L201 718L201 703L186 723ZM201 718L216 697L216 684L201 703ZM216 697L231 676L231 664L216 684ZM231 676L246 656L246 645L231 664ZM246 656L260 639L260 628L246 645ZM260 639L275 622L275 612L260 628ZM275 622L290 608L290 599L275 612ZM290 608L305 595L305 585L290 599ZM305 595L320 584L320 574L305 585ZM320 584L335 573L335 563L320 574ZM335 573L350 561L350 551L335 563ZM350 561L364 549L364 539L350 551ZM364 549L379 539L379 531L364 539ZM379 539L394 530L394 522L379 531ZM394 530L408 525L408 518L394 522ZM408 525L423 520L423 513L408 518ZM423 520L438 514L438 507L423 513ZM438 514L453 508L453 501L438 507ZM587 489L601 492L603 489L588 486Z" fill="#a2a2a2"/>
<path d="M453 508L468 503L468 496L453 501ZM468 503L483 498L483 490L468 496ZM573 491L587 489L588 486L575 486ZM733 552L748 545L748 533L733 539ZM748 545L763 539L762 528L748 533ZM763 539L778 534L776 522L762 528ZM778 534L792 528L790 517L776 522ZM792 528L809 525L807 514L790 517ZM809 525L826 521L825 510L807 514ZM826 521L841 524L839 512L825 510ZM841 524L855 526L854 514L839 512ZM1002 613L1010 621L1022 612L1012 603Z" fill="#a8a8a8"/>
<path d="M483 498L498 495L498 488L483 490ZM685 552L697 566L698 560L687 547ZM855 526L870 532L870 518L854 514ZM870 532L885 537L886 523L870 518ZM885 537L900 544L901 530L886 523ZM900 544L915 552L917 538L901 530ZM915 552L929 559L933 546L917 538ZM929 559L943 566L948 554L933 546ZM943 566L958 577L964 565L948 554ZM958 577L973 587L981 576L964 565ZM973 587L987 600L996 590L981 576ZM987 600L1002 613L1012 603L996 590Z" fill="#aeaeae"/>
<path d="M498 495L512 493L512 485L498 488ZM559 492L573 491L575 486L562 487ZM586 492L600 494L602 491L587 488ZM600 494L615 496L616 494L602 491ZM615 496L630 505L631 502L616 494ZM630 505L645 513L647 510L631 502ZM645 513L660 524L662 521L647 510ZM660 524L675 535L677 531L662 521ZM675 535L686 548L688 544L677 531Z" fill="#b4b4b4"/>
<path d="M512 493L526 493L526 485L512 485ZM526 493L540 492L540 484L526 485ZM540 492L550 492L551 486L540 484ZM550 492L559 492L562 487L551 486ZM572 494L586 492L587 488L573 490Z" fill="#bababa"/>
<path d="M186 751L201 729L201 714L186 735ZM201 729L216 707L216 694L201 714ZM216 707L231 686L231 674L216 694ZM231 686L246 664L246 653L231 674ZM246 664L260 647L260 636L246 653ZM260 647L275 630L275 619L260 636ZM275 630L290 616L290 606L275 619ZM290 616L305 603L305 593L290 606ZM305 603L320 592L320 582L305 593ZM320 592L335 581L335 571L320 582ZM335 581L350 569L350 559L335 571ZM350 569L364 556L364 546L350 559ZM364 556L379 546L379 537L364 546ZM379 546L394 536L394 528L379 537ZM394 536L408 530L408 523L394 528ZM408 530L423 525L423 518L408 523ZM423 525L438 519L438 512L423 518ZM438 519L453 513L453 506L438 512ZM453 513L468 508L468 501L453 506Z" fill="#c0c0c0"/>
<path d="M468 508L483 503L483 496L468 501ZM483 503L498 501L498 494L483 496ZM498 501L512 499L512 491L498 494ZM512 499L526 499L526 491L512 491ZM526 499L540 498L540 490L526 491ZM540 498L549 497L550 491L540 490ZM549 497L558 496L560 491L550 491ZM558 496L572 494L573 490L560 491ZM599 496L614 498L615 496L601 493ZM614 498L629 507L630 504L615 496ZM629 507L644 515L645 512L630 504ZM644 515L659 527L661 523L645 512ZM659 527L674 538L676 534L661 523ZM674 538L685 552L687 547L676 534Z" fill="#c6c6c6"/>
<path d="M585 494L599 496L601 493L586 491Z" fill="#cccccc"/>
<path d="M570 498L585 494L586 491L572 493Z" fill="#d2d2d2"/>
<path d="M186 763L201 740L201 726L186 747ZM201 740L216 718L216 704L201 726ZM216 718L231 695L231 683L216 704ZM231 695L246 672L246 661L231 683ZM246 672L260 655L260 644L246 661ZM260 655L275 637L275 627L260 644ZM275 637L290 624L290 614L275 627ZM290 624L305 610L305 600L290 614ZM305 610L320 600L320 590L305 600ZM320 600L335 589L335 579L320 590ZM335 589L350 576L350 566L335 579ZM350 576L364 563L364 554L350 566ZM364 563L379 553L379 544L364 554ZM379 553L394 542L394 534L379 544ZM394 542L408 536L408 529L394 534ZM408 536L423 530L423 523L408 529ZM423 530L438 524L438 517L423 523ZM438 524L453 518L453 511L438 517ZM453 518L468 513L468 506L453 511ZM468 513L483 509L483 501L468 506ZM483 509L498 507L498 499L483 501ZM498 507L512 505L512 497L498 499ZM512 505L526 504L526 497L512 497ZM526 504L540 504L540 496L526 497ZM540 504L548 502L549 496L540 496ZM548 502L556 501L558 495L549 496ZM556 501L570 498L572 493L558 495Z" fill="#d8d8d8"/>
</g>
<g filter="url(#b1)" fill="none" stroke-linecap="round">
<path d="M1019 571Q1039 585 1048 590L1056 596M616 491Q637 502 648 508Q658 514 669 521Q679 528 686 536L692 544M877 507Q903 511 917 515L931 519M499 481Q517 478 525 477Q534 476 542 477Q550 477 557 478Q565 480 573 480L580 480M929 518Q954 522 967 526Q980 529 995 534Q1009 539 1024 545L1039 551M944 517Q970 527 983 534Q996 541 1009 548Q1023 556 1036 564Q1049 572 1061 578L1072 584M936 521Q962 530 976 537Q990 544 1004 552Q1018 559 1032 567L1047 575" stroke="#989898" stroke-width="3"/>
<path d="M482 500Q502 496 511 494Q521 493 530 492L539 491M891 528Q911 536 921 540Q932 545 942 549Q953 554 964 561L975 567M293 599Q311 583 320 576Q330 569 338 562Q347 554 356 547Q365 539 374 534Q383 529 392 524Q401 520 410 517L419 514M241 656Q258 636 267 626Q276 617 284 609Q293 602 302 595Q311 588 320 581Q329 575 338 569Q346 562 355 555L364 548M765 532Q782 524 792 521Q802 518 813 516Q824 513 833 514L842 514" stroke="#b0b0b0" stroke-width="4"/>
<path d="M734 519Q754 511 764 508L774 504M802 510Q823 504 832 504Q841 503 851 503Q860 503 871 504L881 505M347 524Q367 511 377 507Q387 504 397 501Q407 499 417 497L427 495M675 517Q689 526 693 531L698 536M668 515Q684 527 689 534L695 540M672 519Q688 533 694 539Q700 545 704 537L708 530M785 496Q805 490 815 487Q825 484 834 482L843 481M681 524Q693 538 698 537Q703 536 707 528L711 520M759 495Q774 488 782 484Q791 481 801 477Q811 474 820 472Q830 469 840 467Q849 465 860 464L871 463M1051 603Q1071 615 1081 621Q1091 627 1101 633Q1110 639 1120 648Q1129 656 1139 666Q1148 675 1157 683Q1167 691 1175 698L1182 705M1103 640Q1124 656 1135 666Q1146 675 1156 683L1167 691M789 500Q808 492 818 489Q827 486 836 484Q845 482 855 481Q865 480 875 479Q886 479 897 480L908 482M1046 601Q1074 610 1088 615Q1101 620 1115 624L1128 629M1129 674Q1152 690 1163 696Q1174 703 1183 709L1192 714" stroke="#484848" stroke-width="3"/>
<path d="M1002 593Q1018 607 1023 612L1029 617M552 499Q567 496 577 495Q586 493 596 494Q606 496 616 499Q625 503 635 509Q646 514 656 521L666 529" stroke="#a8a8a8" stroke-width="5"/>
<path d="M940 550Q961 561 972 567Q983 573 994 581L1004 588M276 580Q294 564 303 556Q312 548 321 541Q330 534 339 527Q348 520 357 514Q366 508 375 505Q384 501 393 499L402 496M745 495Q760 489 768 486Q776 484 785 481Q794 479 805 477Q815 474 825 473Q835 472 846 472L856 471M231 633Q249 613 258 603Q267 594 276 585L284 576" stroke="#505050" stroke-width="5"/>
<path d="M1066 648Q1083 661 1091 670Q1100 679 1108 688Q1117 698 1125 707L1134 716M462 486Q479 478 488 476Q497 473 505 471Q514 470 522 469Q530 468 538 468Q546 469 554 471L562 472M834 481Q853 481 863 483Q874 484 884 486Q895 489 905 493Q916 497 927 502L938 507M730 527Q742 519 750 515Q758 511 766 507Q774 503 782 500Q791 496 801 494Q811 491 821 489L831 487M431 499Q451 490 461 486Q471 481 481 478Q491 474 501 472Q510 470 520 469Q529 468 539 469L548 469M323 566Q340 554 348 547Q357 541 365 536Q373 530 382 526L390 522M729 529Q741 521 749 517Q758 513 766 510Q775 506 784 503L794 499M384 525Q405 516 416 513Q426 509 437 505L448 500M753 512Q772 504 782 500Q792 496 804 493Q816 490 827 489L838 487M403 513Q420 508 429 505Q438 502 446 499Q455 495 464 492Q473 489 482 487Q490 484 499 483Q508 482 516 481L524 481" stroke="#585858" stroke-width="4"/>
<path d="M761 501Q775 491 783 486Q790 481 800 477L809 473M745 523Q762 517 770 514Q778 511 788 508Q797 506 807 504Q818 502 827 502L837 502M667 511Q685 524 691 531Q696 537 700 533Q705 529 708 521L712 514M539 475Q554 477 561 478Q569 479 576 480Q584 481 592 482Q600 484 609 486Q618 488 627 493L637 497M693 540Q702 541 705 535Q709 529 712 526Q715 523 719 521Q722 518 726 516L730 514M699 542Q705 529 708 523L712 517M1110 632Q1129 645 1139 653Q1149 662 1158 669Q1168 675 1178 681L1187 686M1081 627Q1100 637 1109 643Q1119 649 1128 657Q1138 666 1147 673Q1157 680 1166 687Q1175 693 1183 698L1190 704M1116 646Q1134 664 1142 673Q1151 681 1160 689Q1169 696 1175 703Q1182 709 1188 717L1193 725" stroke="#303030" stroke-width="3"/>
<path d="M516 480Q534 479 542 479Q549 480 557 481Q564 482 572 483Q580 483 588 484Q597 485 606 487L615 490M661 521Q678 533 684 540Q690 547 695 551Q700 555 704 553Q707 551 711 548L714 545M238 651Q258 628 268 618Q278 607 288 599Q299 590 309 583Q319 575 329 568L340 561M1110 729Q1128 747 1137 756L1145 764M588 481Q605 486 614 489L623 492M904 510Q925 514 936 518Q948 522 959 526Q971 531 983 537Q995 543 1008 550Q1021 556 1033 564Q1046 571 1057 576Q1068 582 1078 588L1089 593M862 486Q887 485 900 487Q913 489 927 493Q941 496 956 501L971 507M999 534Q1028 549 1043 557Q1058 565 1071 572Q1084 578 1096 584Q1108 590 1118 596Q1128 601 1138 606L1147 611M934 513Q957 522 970 528Q982 534 994 541Q1007 548 1020 555Q1032 563 1044 570L1056 577M908 483Q934 489 949 495Q964 500 979 507Q994 515 1010 523L1026 531M1126 675Q1145 691 1154 699Q1162 706 1170 713Q1177 720 1183 728Q1188 737 1192 747L1196 756" stroke="#686868" stroke-width="3"/>
<path d="M635 507Q656 520 666 528Q677 535 684 543Q692 552 697 555L703 557M502 498Q521 496 530 495Q539 495 545 495L552 495M416 527Q436 519 447 515Q457 511 467 508Q478 505 488 503L498 501" stroke="#c8c8c8" stroke-width="3"/>
<path d="M1183 859Q1195 875 1199 883L1203 891M785 486Q806 480 816 478Q826 476 836 474Q845 473 856 473L867 472M467 473Q487 464 497 462Q507 460 516 458L526 457M1056 659Q1070 672 1077 680Q1084 688 1091 696Q1098 704 1105 713L1112 722M1031 595Q1049 608 1057 615Q1064 623 1072 631L1080 639M737 494Q753 486 761 483Q770 480 779 477L789 474M1168 949Q1172 961 1174 967L1176 974M1172 893Q1176 920 1177 932Q1178 945 1178 957L1178 968" stroke="#080808" stroke-width="4"/>
<path d="M517 483Q533 482 540 482Q546 483 553 483L559 484" stroke="#c8c8c8" stroke-width="5"/>
<path d="M289 593Q311 572 323 563L334 554M922 517Q944 527 955 532Q966 538 977 545L989 552M411 504Q431 498 441 494Q451 490 462 486Q472 482 482 479Q492 477 502 475L512 473M246 625Q265 601 275 590L285 579" stroke="#202020" stroke-width="5"/>
<path d="M465 488Q486 481 496 480Q506 478 516 478Q526 477 536 478L545 478M679 514Q692 526 696 530L701 533M366 514Q385 507 394 505Q403 502 412 500Q422 498 431 495Q440 491 450 488Q459 484 469 480Q478 476 487 474L497 472M1140 763Q1156 790 1162 803L1168 816M347 541Q364 528 373 524Q382 520 391 516Q400 513 408 511Q417 509 425 506Q434 503 443 499L452 496M654 502Q672 512 679 517Q687 523 692 528Q696 534 700 531Q704 527 707 518L710 509M1142 680Q1161 693 1169 699Q1177 704 1184 709Q1192 714 1196 722Q1201 730 1204 738L1208 746M966 507Q992 520 1005 528Q1019 535 1032 543Q1046 551 1058 558Q1071 565 1083 572Q1095 579 1104 585Q1114 590 1122 596Q1131 601 1139 606L1147 611M777 476Q798 465 810 460Q821 455 833 450L844 445M927 487Q952 496 964 501Q977 506 991 513Q1004 519 1017 527Q1031 534 1045 542Q1059 549 1072 556L1085 563M1071 622Q1089 633 1098 638Q1106 644 1115 652Q1124 660 1132 669Q1141 677 1150 685Q1159 692 1166 699L1174 705" stroke="#404040" stroke-width="3"/>
<path d="M518 491Q537 490 544 490Q552 490 559 489Q567 489 576 488Q585 488 595 489L605 491M636 502Q653 511 662 517Q670 522 677 528Q684 533 690 539L695 545M557 494Q576 491 586 491Q596 491 606 493L617 494M638 503Q660 516 670 524Q680 531 687 540L694 548" stroke="#a0a0a0" stroke-width="3"/>
<path d="M1161 742Q1173 767 1178 781Q1183 794 1187 808L1192 822M346 538Q365 524 374 520Q384 516 393 513Q403 509 412 507Q421 505 431 501Q440 498 450 494L459 490M785 484Q805 479 815 477Q824 475 834 474Q843 473 853 472Q863 472 873 472L884 473M539 459Q557 464 565 467Q573 470 580 472Q587 474 596 476Q604 479 614 482L623 485M1139 769Q1148 798 1152 811Q1156 825 1159 838L1162 850M894 505Q917 508 929 511L942 514" stroke="#303030" stroke-width="4"/>
<path d="M1140 743Q1153 765 1158 778Q1163 792 1167 805Q1172 818 1176 830Q1180 843 1183 856L1187 869M1178 932Q1184 945 1186 953L1189 961M1167 800Q1181 816 1188 825L1194 834M1147 836Q1156 859 1160 871Q1164 883 1167 895Q1171 907 1172 919Q1174 931 1175 942L1176 953M831 462Q853 460 866 462Q878 463 890 466Q903 469 915 474Q928 478 941 486L955 493M856 483Q880 483 893 485Q905 487 918 490L931 494M775 513Q797 505 809 502Q821 498 832 498L843 498M301 561Q319 546 329 538Q338 531 347 524L356 517M1184 730Q1189 757 1192 771L1195 786M733 486Q746 480 753 478Q760 475 768 472Q776 470 787 468L797 465M1169 858Q1175 881 1178 892Q1180 904 1182 915L1183 927M1196 842Q1200 870 1200 883Q1200 896 1199 911Q1198 925 1197 940L1195 955" stroke="#101010" stroke-width="4"/>
<path d="M540 497Q552 496 560 495Q567 494 576 492Q586 491 596 492Q605 494 615 497L625 500M308 603Q327 590 336 582Q345 575 354 567Q362 559 372 552Q381 545 390 540Q399 534 408 531Q416 527 426 523L435 519" stroke="#f0f0f0" stroke-width="4"/>
<path d="M832 477Q852 476 863 478Q874 479 886 482Q897 485 908 489Q919 494 931 499L943 505" stroke="#383838" stroke-width="5"/>
<path d="M557 496Q573 494 581 493Q590 492 598 494Q607 495 616 499L625 502" stroke="#d0d0d0" stroke-width="4"/>
<path d="M276 624Q297 604 307 595Q317 586 328 577L338 569" stroke="#e0e0e0" stroke-width="5"/>
<path d="M536 479Q551 481 559 483Q566 484 574 484Q581 484 590 485Q599 487 608 489Q617 491 626 496Q636 501 645 506L655 511M972 543Q995 551 1006 557L1018 562M761 531Q777 523 785 520Q793 516 802 514L811 511M1056 661Q1074 676 1082 685Q1091 694 1100 704Q1109 714 1118 724Q1127 734 1135 743Q1142 753 1149 764L1156 775M1073 627Q1095 643 1106 652L1117 662M990 581Q1013 601 1020 607Q1028 613 1035 621L1043 628M926 519Q949 528 960 534Q972 539 984 546Q996 553 1008 561L1021 569M826 490Q846 488 857 488Q868 488 880 489Q891 489 903 492Q915 495 927 500Q940 504 953 510L966 515" stroke="#787878" stroke-width="4"/>
<path d="M837 472Q856 472 866 473Q876 474 886 476Q897 478 907 482L917 486M213 677Q233 652 243 640Q253 628 262 617Q272 606 282 597Q292 587 302 579Q312 570 322 562L333 555M894 530Q912 539 921 543L930 548M1087 598Q1108 609 1118 613Q1128 618 1138 624Q1148 630 1157 639L1167 649M268 624Q284 607 292 600Q300 592 309 585Q317 578 325 572L333 566" stroke="#686868" stroke-width="4"/>
<path d="M316 577Q335 565 344 558Q353 551 362 545L371 539M314 585Q331 574 339 568Q348 562 356 555Q364 549 373 544L381 539" stroke="#b0b0b0" stroke-width="5"/>
<path d="M284 598Q307 579 319 571L331 563M466 474Q487 464 497 462Q507 459 516 458Q526 456 536 457L546 457M476 479Q495 475 504 473Q513 472 522 472Q531 472 539 473L547 474M308 575Q325 560 334 553Q343 546 351 538L360 531M238 638Q256 617 265 607Q274 597 283 588Q293 580 302 571Q311 563 320 556L329 548M823 476Q841 475 851 475Q861 475 872 476Q883 478 894 481L904 484" stroke="#606060" stroke-width="5"/>
<path d="M494 505Q511 502 520 502Q528 502 536 501Q543 501 548 500Q553 500 560 498Q568 497 576 495L585 494" stroke="#f8f8f8" stroke-width="5"/>
<path d="M881 500Q903 507 914 511Q925 515 937 520L948 525" stroke="#a0a0a0" stroke-width="5"/>
<path d="M1051 606Q1063 619 1069 626Q1074 632 1080 639Q1085 646 1090 654L1095 662M193 706Q212 682 222 670Q231 658 241 646Q250 635 260 624Q269 614 278 605Q288 596 297 588Q307 580 316 572L326 565M809 522Q830 514 839 513Q849 512 859 512L869 511" stroke="#707070" stroke-width="5"/>
<path d="M742 514Q756 506 764 502Q771 498 779 495Q787 491 797 488Q807 485 816 482Q826 480 835 478L844 477M1015 602Q1029 608 1037 612Q1045 615 1053 620L1061 625M1167 896Q1176 911 1179 918Q1183 926 1185 934L1187 941M1090 714Q1110 732 1119 740Q1129 749 1138 757L1147 764M1151 827Q1158 849 1162 860Q1165 870 1168 881Q1171 892 1173 903Q1175 914 1176 925L1178 936M1180 855Q1187 878 1188 888Q1190 899 1191 910L1192 921M1192 912Q1192 936 1191 948L1190 960M1084 594Q1102 608 1111 614Q1119 621 1127 629Q1135 636 1143 647L1151 658M1181 909Q1185 926 1186 935Q1187 943 1187 953L1188 962M1178 871Q1185 891 1187 900Q1189 910 1190 920Q1191 930 1191 940L1191 951M1175 833Q1180 856 1183 868Q1186 880 1187 891Q1188 902 1188 913L1189 925M1144 810Q1155 833 1160 843Q1165 854 1168 865Q1172 875 1176 886Q1179 897 1181 908Q1183 919 1184 929L1185 940" stroke="#181818" stroke-width="4"/>
<path d="M1048 582Q1067 592 1076 598L1085 603M1178 933Q1179 951 1180 961L1180 970M1073 585Q1089 601 1096 608L1103 616M1135 653Q1151 669 1160 676L1168 682M1022 532Q1041 547 1050 554L1059 561M398 503Q415 499 424 496Q433 493 442 489Q451 485 460 481L469 477M335 542Q353 527 361 521Q370 514 379 510Q389 506 397 503L406 500" stroke="#000000" stroke-width="5"/>
<path d="M859 510Q875 515 883 518L890 521M1025 622Q1042 628 1052 632L1061 636M1054 584Q1073 593 1081 598L1090 602" stroke="#686868" stroke-width="5"/>
<path d="M1049 646Q1067 659 1076 667Q1085 674 1094 683Q1102 692 1111 702Q1120 711 1129 720L1138 729M223 666Q242 641 251 630Q260 619 269 609L279 598M982 564Q1002 576 1012 583Q1023 589 1031 593L1039 598M738 496Q753 491 762 488Q770 486 779 484Q788 482 800 480L811 478M907 514Q932 523 945 529L957 535M1149 795Q1158 819 1162 830L1165 841M1151 808Q1161 826 1166 835Q1171 844 1175 853L1179 862M470 479Q491 474 501 473L511 472M230 635Q250 613 260 603Q269 592 279 583Q289 574 299 565Q309 556 319 548Q329 540 339 533L349 525M734 498Q747 494 754 492Q760 490 768 488Q775 486 783 485L792 483M1185 784Q1191 808 1195 820L1198 832M1147 843Q1157 869 1160 882Q1164 895 1166 908Q1169 921 1171 934Q1172 947 1173 957L1173 967M1163 922Q1170 940 1173 947Q1176 954 1177 962L1179 971M1049 597Q1069 607 1079 612Q1088 617 1098 622L1107 628M202 674Q220 653 229 643L238 632M1178 863Q1186 883 1188 893Q1190 903 1191 913Q1193 923 1193 934L1193 945M937 496Q965 504 980 510L994 516" stroke="#282828" stroke-width="4"/>
<path d="M620 500Q636 509 644 514L652 520M580 493Q600 495 610 498Q620 501 630 507Q641 512 651 520L661 528" stroke="#d8d8d8" stroke-width="3"/>
<path d="M196 713Q215 690 224 679Q234 667 243 656Q252 644 261 635Q270 625 279 616L289 608" stroke="#d0d0d0" stroke-width="5"/>
<path d="M483 500Q506 496 517 495L528 495" stroke="#f8f8f8" stroke-width="3"/>
<path d="M732 538Q750 527 760 522Q769 517 779 512L788 507M1090 661Q1105 681 1113 691Q1120 701 1128 711Q1136 721 1142 731Q1149 740 1155 751Q1160 762 1165 775L1169 788M831 475Q852 474 864 476Q876 477 888 480Q900 483 912 488L924 493M660 509Q682 523 688 531L694 539M1014 567Q1041 581 1053 586Q1065 591 1076 597Q1087 603 1097 608Q1107 614 1117 619Q1127 624 1137 632L1146 640M951 512Q976 522 989 527Q1003 533 1016 540Q1030 547 1044 554Q1058 561 1071 567Q1083 573 1095 579L1107 585M889 483Q913 485 927 487Q940 489 955 493Q969 497 985 503Q1000 509 1016 516L1033 523" stroke="#585858" stroke-width="3"/>
<path d="M432 510Q450 503 460 499Q469 496 478 493Q487 490 496 488Q505 486 514 485Q523 485 532 484Q540 484 547 484L554 485M619 496Q639 506 649 513Q658 519 668 526Q677 532 684 540L691 548M390 538Q410 528 420 523Q430 519 441 514L451 509" stroke="#b8b8b8" stroke-width="3"/>
<path d="M860 486Q882 489 893 493Q904 496 915 501Q926 505 938 511L950 517" stroke="#787878" stroke-width="5"/>
<path d="M1124 748Q1141 767 1148 779Q1154 792 1160 804Q1166 816 1171 827Q1176 839 1180 851Q1185 862 1188 874L1192 886M265 587Q284 568 294 559Q304 551 313 542Q323 534 333 526Q342 519 352 512L361 505M790 473Q812 468 823 466Q833 465 844 463Q854 462 867 463Q879 463 891 465Q903 467 915 471L927 474M857 509Q873 513 880 515L888 517" stroke="#303030" stroke-width="5"/>
<path d="M530 499Q544 498 549 497Q555 497 562 495Q570 494 578 493Q587 492 595 493Q604 494 613 497Q621 500 631 505L640 509" stroke="#a8a8a8" stroke-width="4"/>
<path d="M306 604Q325 593 334 586L343 579" stroke="#ffffff" stroke-width="4"/>
<path d="M508 500Q525 498 533 498Q541 498 546 497Q551 496 557 496Q564 495 572 493Q580 492 588 492L597 493M437 514Q456 507 465 503Q474 500 483 498Q492 496 501 494Q510 493 519 492Q528 492 536 492Q543 491 549 491L556 491M338 580Q356 564 365 557Q374 550 384 543Q393 537 402 533Q411 529 420 526L429 522M426 519Q445 512 454 508Q463 505 472 502Q482 499 491 497Q500 496 509 495Q518 494 526 493L535 493M570 495Q588 493 597 494Q606 495 616 499Q625 502 634 507Q644 512 653 519Q662 526 671 533Q680 540 687 548L693 556M536 496Q548 495 554 494Q560 494 568 492Q577 491 585 491Q594 491 603 493L612 494" stroke="#e0e0e0" stroke-width="4"/>
<path d="M388 540Q404 532 411 529Q419 525 427 522L435 518M313 598Q334 583 344 573Q354 564 364 556L375 547M295 613Q314 599 324 592Q333 586 342 579Q352 571 361 564L370 557" stroke="#e8e8e8" stroke-width="4"/>
<path d="M258 652Q275 632 283 624Q292 617 301 609Q309 602 318 596Q326 590 335 583L343 577M365 543Q381 534 389 530Q397 526 405 523Q413 521 421 518L429 515M625 502Q642 511 651 516L660 521M252 658Q271 633 280 622L290 612" stroke="#c0c0c0" stroke-width="3"/>
<path d="M914 527Q935 536 945 541L956 546M211 657Q229 636 239 626Q248 616 257 606Q266 596 275 587Q284 578 294 570Q303 561 312 554L322 546M993 581Q1014 594 1022 598Q1031 602 1040 606Q1048 610 1056 615L1065 620M825 494Q842 491 851 490Q860 489 870 488Q880 488 891 489L901 490" stroke="#404040" stroke-width="5"/>
<path d="M1055 635Q1071 648 1079 655Q1087 662 1096 671Q1104 680 1112 689Q1120 699 1128 708L1136 717M1105 642Q1122 656 1130 665Q1139 674 1147 681Q1156 688 1164 695Q1172 701 1179 707Q1185 713 1190 721L1195 729M406 518Q424 512 434 508Q443 504 453 500L463 497M1017 592Q1035 600 1044 604L1053 608M463 476Q481 467 489 464Q498 462 506 460L514 458M414 507Q432 501 441 497Q450 494 459 490Q468 486 477 483Q486 479 495 477Q504 476 512 475Q521 474 529 473L538 473M1048 579Q1067 592 1075 599Q1083 606 1090 613Q1098 620 1104 627L1111 634" stroke="#585858" stroke-width="5"/>
<path d="M390 535Q406 527 414 523Q422 520 430 516L438 513M214 694Q235 665 245 652Q255 639 265 627L274 615M445 515Q465 508 476 504Q486 501 495 499Q505 498 515 497Q524 496 533 495Q542 495 548 494L555 494M282 626Q300 610 309 603Q318 596 327 590Q336 583 345 576Q354 568 363 561Q372 554 381 548L391 541" stroke="#c8c8c8" stroke-width="4"/>
<path d="M566 478Q579 480 587 482Q594 483 602 485L610 488M788 521Q809 513 819 510Q830 507 840 506L849 505M584 473Q598 478 606 481L614 484M1134 766Q1154 787 1162 797L1170 807M599 485Q621 491 632 496L644 502M1073 571Q1095 583 1104 588L1112 592M955 507Q979 519 991 526Q1003 533 1015 541L1027 549M258 612Q276 591 285 582Q294 573 304 565Q313 556 323 548L332 540M776 499Q795 494 806 492Q817 490 827 490Q837 490 847 490L857 491M654 505Q675 517 682 523Q690 529 696 533Q701 536 705 524L708 512M698 562Q705 562 709 560Q712 558 716 554L719 549M1101 616Q1130 624 1144 632L1159 640M1100 614Q1117 626 1125 634Q1134 642 1142 652Q1150 662 1158 670Q1167 678 1174 686L1182 693M1116 678Q1132 697 1140 706Q1148 715 1155 724Q1162 732 1167 743Q1173 753 1177 765Q1181 777 1185 789Q1189 802 1193 815L1196 828M843 469Q865 463 877 460Q889 458 901 458Q914 458 927 460L940 462" stroke="#505050" stroke-width="3"/>
<path d="M593 479Q612 485 622 490Q632 494 643 499L653 505M774 472Q792 467 802 464Q812 462 821 460Q831 458 840 456Q850 454 861 453L872 453M571 474Q587 478 597 481Q607 484 618 488L628 492M699 559Q705 557 709 555L712 553M699 556Q707 554 711 552Q714 549 718 546Q722 543 726 540L730 536M909 514Q928 522 939 527Q949 531 959 537Q970 543 981 550L991 556M774 475Q792 470 802 467Q813 465 823 463Q833 461 843 460Q853 458 864 458L876 458M639 493Q662 504 674 509Q686 515 691 521L697 527M428 498Q449 490 460 486L471 481M589 481Q604 485 612 487Q620 489 628 492L637 496M491 476Q510 473 519 472Q528 472 537 473Q546 473 554 475L563 477M879 471Q901 473 913 475Q925 478 937 483Q950 488 964 493Q977 499 990 507Q1004 514 1018 522L1032 530M1119 682Q1139 699 1148 707Q1158 715 1166 722Q1174 728 1180 738Q1186 747 1190 758Q1195 768 1200 780L1205 792M1068 585Q1092 594 1103 599Q1114 604 1125 608Q1135 612 1146 617L1156 622M737 491Q751 482 758 479Q765 475 773 471Q781 467 792 464Q804 460 814 457Q825 454 836 451L847 448M1118 702Q1135 720 1142 728Q1149 736 1155 744Q1162 752 1167 763Q1171 774 1175 785Q1180 796 1184 807Q1188 819 1192 830Q1196 842 1199 853L1203 865M1156 734Q1172 749 1178 759Q1185 768 1190 778Q1196 788 1202 800L1207 811" stroke="#383838" stroke-width="3"/>
<path d="M648 506Q666 517 674 523Q682 529 687 536Q693 542 697 544Q701 546 705 542L708 538M597 485Q619 491 630 496L641 502M432 499Q452 491 462 487Q472 483 482 480Q492 478 502 476L512 475M954 510Q980 522 994 529Q1008 536 1022 544L1037 553M405 524Q427 515 439 510L450 505M861 501Q882 500 893 500Q904 501 915 503L927 505M611 491Q633 500 644 506Q655 512 666 519L676 525M836 490Q855 491 865 493Q876 495 886 498Q896 501 907 505Q917 509 928 515Q938 520 949 526L960 532M949 498Q975 510 989 517Q1003 525 1017 533Q1031 541 1045 549Q1060 558 1072 565Q1085 572 1096 579L1107 585" stroke="#787878" stroke-width="3"/>
<path d="M1153 757Q1163 780 1167 791Q1172 803 1176 814Q1180 825 1183 836Q1187 848 1191 859Q1194 871 1196 882L1197 893M755 512Q773 506 782 504Q791 501 802 499L813 497M430 491Q448 484 457 480L466 476M1187 894Q1190 914 1191 925Q1191 936 1191 947L1191 959M996 513Q1015 527 1025 535L1035 543M208 670Q226 652 235 642L244 633M557 464Q574 469 581 471Q588 473 597 476Q606 479 616 482Q626 485 636 490L646 494M1085 593Q1102 607 1110 613Q1118 620 1126 627Q1134 634 1141 644Q1149 655 1156 665Q1164 674 1171 682L1179 690M850 468Q874 471 886 474Q898 477 909 482L921 487M1172 744Q1183 763 1188 773Q1194 783 1199 793Q1204 804 1209 815L1214 827M1149 760Q1159 786 1163 798Q1168 810 1172 822Q1176 834 1179 847Q1183 859 1186 871Q1189 883 1190 895Q1191 907 1192 919Q1192 931 1191 944L1191 957M751 489Q766 478 774 474Q781 469 792 464Q803 460 813 456Q824 451 835 447L845 443" stroke="#202020" stroke-width="3"/>
<path d="M1072 641Q1090 656 1099 665Q1108 675 1117 685Q1126 695 1135 705Q1144 714 1151 723L1159 732M974 523Q988 533 995 537L1002 542" stroke="#707070" stroke-width="4"/>
<path d="M693 525Q703 523 707 509L710 494M1176 823Q1181 848 1184 860L1186 873M861 476Q885 477 897 481Q908 484 921 488L933 492M1129 771Q1141 799 1146 813Q1151 827 1155 839Q1159 851 1163 864L1166 876M1185 873Q1188 895 1189 906Q1190 917 1190 928Q1190 939 1189 950L1188 962" stroke="#080808" stroke-width="3"/>
<path d="M619 499Q637 510 647 517Q656 523 665 531L675 539M621 498Q638 508 647 513Q656 519 665 525Q674 531 681 538Q687 545 693 551L699 556M226 690Q244 665 252 655Q261 645 269 635Q278 626 287 618Q295 610 304 603L313 596" stroke="#d0d0d0" stroke-width="3"/>
<path d="M599 495Q616 498 624 503Q633 508 641 514Q650 520 658 526L667 533M206 716Q223 691 232 679Q240 667 249 656Q258 645 266 635L274 626" stroke="#e0e0e0" stroke-width="3"/>
<path d="M1023 598Q1037 610 1043 617Q1050 624 1057 632L1063 640M469 473Q487 465 496 463Q504 461 513 460Q522 459 530 458Q539 458 548 461Q557 463 565 466L574 468M290 575Q308 560 317 553Q326 546 335 540Q344 533 353 527Q362 521 371 517L380 513M759 508Q775 502 784 499Q793 496 803 494Q814 492 824 491Q834 490 843 490L853 490M263 602Q281 585 290 577L300 570M378 514Q395 507 404 505Q412 503 421 501Q430 498 439 495L448 492M738 538Q754 529 762 525Q770 520 778 516Q786 512 795 509L804 506M1105 636Q1119 656 1126 668Q1132 680 1139 690Q1146 701 1152 712L1158 722" stroke="#202020" stroke-width="4"/>
<path d="M298 593Q316 579 325 573Q334 566 343 559Q352 552 361 545L370 539M645 508Q660 518 668 523L676 527M924 541Q942 549 951 553Q960 558 970 564Q979 569 989 576L998 583M870 501Q889 498 899 499Q909 499 920 500Q930 501 942 503L954 505M1021 585Q1043 596 1054 602Q1065 607 1075 614Q1085 620 1095 626Q1105 632 1114 639L1124 647" stroke="#808080" stroke-width="3"/>
<path d="M646 505Q664 516 673 522Q682 529 687 535Q693 542 698 543Q702 544 705 539L709 535" stroke="#909090" stroke-width="3"/>
<path d="M918 540Q937 549 946 554Q956 559 966 565L976 572M333 570Q353 553 363 546Q374 539 384 533Q394 526 404 523L414 520" stroke="#c0c0c0" stroke-width="5"/>
<path d="M842 505Q857 505 865 506L873 507M800 499Q822 492 831 491Q841 490 851 490Q861 489 873 490Q884 490 895 492Q906 495 918 498L929 502M879 494Q894 491 902 490L910 490M1121 751Q1132 773 1137 787Q1141 801 1146 815Q1150 829 1153 841L1157 853M425 508Q444 500 454 496Q463 492 473 488Q483 484 492 482Q501 481 510 479L519 478M741 507Q755 499 763 495Q770 491 778 488Q786 484 796 481L806 478M338 543Q356 530 365 525Q374 520 383 516Q392 512 401 510Q410 508 419 505Q428 503 437 499L447 496M244 610Q264 589 274 579Q284 570 294 561Q304 552 315 544L325 535" stroke="#505050" stroke-width="4"/>
<path d="M732 497Q743 493 749 491Q756 489 763 487Q771 484 779 482Q787 481 797 479L807 477M705 515Q712 489 715 488Q719 486 723 485Q727 483 731 482L736 480M1142 782Q1151 810 1155 823Q1159 836 1163 848Q1167 861 1169 873Q1172 886 1174 898L1176 911M1175 842Q1180 865 1182 877Q1185 889 1185 900Q1186 912 1186 923Q1186 934 1186 945L1185 956M696 530Q704 519 708 505Q711 490 715 488Q718 485 722 483L726 481M780 480Q799 476 809 474Q819 472 828 471Q837 470 846 470L856 470M974 508Q996 515 1007 519L1018 524M1167 872Q1174 898 1176 910Q1178 923 1179 935Q1180 946 1180 958L1180 970M682 513Q693 524 697 527Q702 529 705 516L708 502M827 487Q845 483 855 482Q865 480 876 479L886 478M1180 876Q1184 899 1185 910Q1186 921 1186 932Q1186 943 1185 954L1185 965M1176 757Q1185 779 1189 791Q1193 802 1197 814Q1201 826 1206 839L1210 851M1184 799Q1192 822 1196 834Q1199 846 1202 858Q1205 869 1206 880Q1207 891 1206 904Q1206 917 1205 932L1203 947M1176 756Q1186 779 1190 792Q1195 805 1200 818Q1205 831 1209 845Q1212 858 1214 870L1215 882" stroke="#101010" stroke-width="3"/>
<path d="M355 513Q373 502 383 499Q393 495 402 493Q411 492 420 489Q430 486 439 482Q449 478 458 474Q468 469 478 465L487 461M976 506Q1002 520 1015 527L1028 534M1002 536Q1029 553 1042 562Q1055 570 1066 577L1078 585M1164 768Q1182 778 1189 783L1197 789M238 620Q254 604 262 596Q269 588 278 581L286 574M849 461Q865 462 873 463L881 463M848 457Q867 452 877 449L887 447M1077 571Q1095 582 1102 586L1108 591M765 499Q781 492 792 490Q802 487 813 485Q823 482 833 482L843 481M1071 595Q1091 610 1101 618L1110 626M729 500Q740 494 748 490Q755 487 764 484Q772 481 782 478Q792 475 804 472L816 469M1144 699Q1160 716 1167 724Q1174 732 1178 743L1183 755M1186 851Q1192 879 1193 893Q1194 907 1194 921L1193 936M291 571Q309 556 318 550Q327 543 335 537L344 530M980 500Q1004 514 1016 522Q1028 529 1040 537L1052 544M422 492Q440 485 449 481Q458 477 467 473Q476 468 485 466Q494 463 502 461Q511 459 520 459L528 458" stroke="#000000" stroke-width="3"/>
<path d="M209 702Q232 671 243 656L254 642M360 548Q378 537 386 532Q395 527 404 524Q412 522 421 518Q429 515 438 512Q447 509 455 505Q464 502 473 499L481 496M306 583Q325 569 334 562Q343 555 352 548Q360 540 369 535L379 529M929 529Q944 529 952 530L960 531" stroke="#888888" stroke-width="4"/>
<path d="M414 514Q433 507 443 504Q452 500 462 497Q471 493 481 491Q490 488 499 487Q509 486 518 486Q527 485 535 485L543 486M658 513Q681 527 688 535L695 543M833 501Q851 501 860 503Q870 504 879 506Q889 508 899 511L909 515M1051 601Q1066 614 1073 621Q1081 628 1088 635L1094 642M866 515Q886 517 897 519Q907 522 918 525L929 529M1073 576Q1097 589 1107 594Q1117 600 1127 605L1137 610M604 486Q623 492 633 497Q643 502 653 508L663 514M598 488Q617 492 627 496Q637 501 647 506Q657 512 667 518L677 524M651 506Q674 518 682 525L690 531M810 476Q833 468 845 464Q856 460 870 458L884 455M1122 697Q1141 715 1149 723Q1157 732 1164 741Q1171 750 1175 761Q1180 772 1185 785Q1190 797 1194 809Q1199 822 1203 835L1208 848M889 503Q915 500 929 499Q944 499 960 501L976 503M1094 641Q1115 650 1126 657Q1137 663 1147 669Q1158 675 1168 680L1179 684M1035 600Q1056 608 1066 614Q1076 619 1086 624Q1096 629 1106 634Q1115 639 1125 647L1134 655M1049 579Q1073 589 1084 594Q1094 599 1104 604Q1115 609 1124 613Q1134 618 1143 624Q1152 631 1162 640L1171 649M1104 643Q1124 659 1135 668Q1145 677 1155 684Q1166 692 1174 698Q1183 705 1190 711L1197 718M805 489Q827 483 838 480Q848 478 860 477Q873 476 885 476Q898 477 911 479Q924 481 938 486L953 491" stroke="#606060" stroke-width="3"/>
<path d="M1173 838Q1183 863 1187 876Q1190 889 1192 901Q1194 914 1194 928L1194 942M684 521Q695 532 699 528Q704 524 707 511Q710 498 714 495L717 491M1140 805Q1150 829 1155 839Q1159 850 1162 861Q1166 871 1169 882Q1172 893 1174 904Q1176 914 1178 925L1179 935M741 522Q757 512 765 508Q774 504 782 500Q791 496 802 492Q812 489 822 487L832 484M572 473Q587 475 595 477L604 480M705 523Q711 500 714 497L718 494M1141 801Q1154 827 1160 839Q1166 850 1170 862Q1175 874 1179 886Q1183 898 1185 910L1187 921M729 516Q738 512 745 509Q752 507 759 505Q767 502 775 500Q782 498 792 496L801 495M741 517Q755 509 763 505Q770 501 777 498L785 494M431 490Q450 483 460 480Q470 476 479 473Q489 470 498 469L508 467M1137 779Q1152 803 1159 814L1165 824" stroke="#181818" stroke-width="3"/>
<path d="M930 536Q952 550 964 558L976 567M731 486Q741 482 747 480Q753 478 760 476Q767 475 774 473L781 471M1114 663Q1130 681 1138 690Q1147 698 1154 706Q1162 714 1168 721Q1175 728 1179 739Q1183 749 1187 759L1191 770M922 495Q948 507 961 515Q974 522 988 531L1001 540M297 574Q315 560 323 554Q332 547 340 541L349 534M980 558Q1005 571 1018 578Q1030 585 1041 590L1051 595M411 501Q431 495 441 490L451 485M789 482Q814 474 826 471Q838 468 850 466L863 464M1113 690Q1127 710 1134 720Q1141 730 1147 740Q1153 750 1157 763L1162 775M291 597Q309 581 317 574Q326 568 335 561Q343 554 352 547Q360 540 369 534Q377 529 386 524L395 519M928 498Q952 503 964 506L977 509M775 501Q793 494 803 492Q813 489 823 487L832 486M802 464Q826 457 838 454Q850 451 864 450L878 448" stroke="#484848" stroke-width="4"/>
<path d="M1142 834Q1151 852 1155 861Q1159 870 1162 879L1165 889M1135 710Q1149 727 1155 735Q1161 744 1165 755Q1169 766 1173 777L1177 789M1155 819Q1164 838 1169 848Q1173 858 1177 868Q1181 878 1184 888Q1187 898 1188 907L1190 917M841 468Q861 466 872 466Q883 466 895 469Q906 471 917 474L928 477M1154 748Q1164 771 1169 783Q1174 795 1178 808L1182 820M734 534Q750 525 758 521Q766 517 774 513Q782 508 791 505Q801 502 811 498Q821 495 830 494L839 493" stroke="#181818" stroke-width="5"/>
<path d="M366 525Q383 518 391 515Q399 513 408 511L416 509M698 542Q705 529 708 521Q711 514 715 511Q718 509 721 507L725 504M1027 542Q1051 561 1060 569L1070 576M691 536Q701 543 704 536Q708 529 711 526Q714 522 718 520L721 518M1138 667Q1154 684 1162 691Q1170 699 1176 706Q1182 713 1186 722Q1191 731 1194 741Q1197 752 1200 764L1203 777M1062 586Q1073 595 1078 599L1082 603M326 549Q344 535 352 528Q361 521 370 517Q379 512 388 509Q397 505 406 503Q414 501 423 498Q432 495 441 491L450 487M1151 784Q1164 802 1169 811Q1175 820 1180 829L1185 838M701 542Q708 528 712 525Q715 522 719 520L722 518" stroke="#282828" stroke-width="3"/>
<path d="M507 487Q524 486 533 487L541 487M954 556Q973 569 982 576Q991 584 1000 591Q1009 599 1015 605L1022 610M807 516Q830 513 840 515Q850 516 860 519Q871 522 881 525Q892 529 902 534L913 540" stroke="#989898" stroke-width="4"/>
<path d="M875 484Q897 487 907 490Q918 493 929 497Q941 501 953 506L965 511M564 484Q580 484 588 485Q597 486 606 488Q615 490 625 494L635 498M854 514Q871 514 880 513Q888 513 898 514L907 515M522 462Q540 460 549 463Q558 466 567 468Q575 470 582 472L589 474M414 508Q432 502 441 499Q450 495 459 492Q468 488 477 485Q486 482 495 480Q504 479 513 478Q521 478 530 477L538 477" stroke="#808080" stroke-width="4"/>
<path d="M585 484Q605 489 615 493L626 496M617 487Q639 498 651 505L662 511M779 528Q799 520 810 517Q821 514 831 514Q841 513 851 514Q861 515 871 517Q882 519 893 522L903 525M1008 543Q1037 560 1050 567Q1063 575 1076 582Q1088 589 1098 595Q1108 601 1117 607Q1127 613 1136 619L1145 625M849 496Q870 497 880 498Q891 500 901 503Q912 506 923 510Q934 514 946 519Q958 524 970 530Q982 537 994 544L1006 551M1105 658Q1124 676 1133 685Q1142 693 1151 701Q1160 709 1167 716Q1174 724 1180 733L1185 742M1122 670Q1140 688 1149 697Q1157 705 1164 713Q1172 721 1177 730Q1183 740 1187 751Q1190 762 1195 775Q1199 787 1203 801L1207 814M851 474Q875 473 887 474Q900 474 912 477Q925 479 939 484Q953 489 968 495Q982 502 997 510L1012 517M1029 584Q1048 595 1057 602Q1067 608 1075 614Q1084 620 1092 627Q1100 633 1108 641Q1116 648 1124 658Q1132 668 1140 677L1147 686M809 497Q831 489 841 487Q852 484 864 483Q877 482 889 482L902 483" stroke="#707070" stroke-width="3"/>
<path d="M360 546Q376 535 384 530Q391 525 399 522L407 519M1048 633Q1065 645 1074 651Q1082 657 1091 665Q1099 673 1108 681L1117 690M352 546Q367 535 375 532Q383 528 391 525L399 522M572 485Q588 485 597 487Q606 489 616 492Q625 495 634 500Q644 505 653 511Q663 516 672 523L681 529M419 504Q436 498 445 495Q454 492 462 489Q471 485 480 483Q489 480 497 479Q506 477 514 477Q523 477 531 476L539 476M504 484Q521 482 529 481Q538 481 545 482Q552 482 559 483Q567 483 574 483L582 483M289 581Q309 564 318 556Q328 549 338 541Q347 534 357 527Q366 520 376 516L386 512M1049 624Q1064 640 1072 648Q1079 657 1086 667Q1093 677 1100 688L1107 699M211 678Q230 653 240 641Q249 629 258 618L267 607" stroke="#606060" stroke-width="4"/>
<path d="M1146 707Q1160 725 1166 734Q1172 744 1176 756Q1180 768 1184 781Q1187 794 1191 807Q1195 820 1198 834L1202 847M1175 879Q1178 903 1179 915Q1179 928 1179 939L1179 950M753 519Q770 510 779 506Q788 501 799 498Q810 494 821 492L831 489M1069 611Q1085 623 1092 630Q1099 636 1107 644Q1114 651 1121 661Q1128 671 1135 680Q1142 689 1149 697L1156 706" stroke="#080808" stroke-width="5"/>
<path d="M428 522Q447 514 456 510Q466 506 475 503L485 499" stroke="#b8b8b8" stroke-width="4"/>
<path d="M640 504Q660 515 670 522L680 528M659 522Q678 536 685 543Q691 551 697 555Q702 558 705 557L709 556M1020 588Q1034 596 1040 599L1046 603M573 487Q589 487 598 489Q606 491 615 493Q624 496 633 501Q642 505 651 511Q659 516 668 522Q677 528 683 534L689 541M237 669Q256 644 266 632Q276 621 286 612Q295 602 305 594L315 586M935 511Q965 517 981 524Q997 530 1014 537L1031 544" stroke="#888888" stroke-width="3"/>
<path d="M282 604Q304 582 315 572L326 563M1144 749Q1157 771 1162 783Q1168 796 1172 808Q1177 820 1181 832Q1185 845 1190 857L1194 870M392 512Q410 507 420 504Q429 500 438 496Q448 492 457 488Q467 484 476 480Q486 476 495 474Q504 472 513 471L522 470M576 478Q593 481 603 483Q612 486 623 490Q633 494 643 499Q654 504 664 510L675 516M802 473Q823 468 834 466Q844 464 855 464Q866 463 879 463Q891 463 903 466L915 469M1056 650Q1069 664 1076 672Q1083 680 1090 689L1097 698M413 499Q431 493 441 489Q450 486 459 482Q468 478 478 474Q487 470 496 469Q505 467 514 466Q523 465 531 465L540 464" stroke="#404040" stroke-width="4"/>
<path d="M838 488Q856 485 865 485Q875 485 885 485L895 486M289 572Q308 557 317 550Q326 543 336 536Q345 529 354 523Q363 516 372 512Q382 509 391 506Q400 503 409 501L418 499M296 591Q314 575 323 568Q333 560 342 553Q351 545 360 538Q369 531 378 526Q387 521 396 517Q405 514 414 511L423 508M440 493Q457 485 466 482Q474 478 483 475Q491 472 499 470L508 469" stroke="#484848" stroke-width="5"/>
<path d="M1176 928Q1179 948 1180 959L1181 969M326 534Q347 519 357 512Q367 505 378 502Q388 498 399 496L409 494M813 466Q836 464 847 464Q859 463 872 464Q885 466 898 470L911 474M1125 639Q1144 659 1154 668Q1164 677 1173 684Q1182 692 1189 698L1196 705M1189 770Q1196 800 1200 816Q1203 831 1206 846Q1209 861 1209 875L1209 889M1180 828Q1191 847 1196 858L1202 868M1178 759Q1185 781 1188 793Q1191 805 1194 817Q1197 830 1200 842Q1203 854 1204 866Q1205 877 1206 889L1206 900M1098 633Q1117 647 1126 657Q1135 668 1144 677Q1153 686 1162 694Q1171 702 1178 710L1185 717M1192 789Q1198 819 1201 835Q1204 850 1205 864Q1206 878 1206 893L1205 907M752 490Q767 479 775 475Q783 470 794 465L805 461M1087 593Q1107 603 1116 607Q1125 611 1134 615Q1143 619 1152 627L1161 635M387 499Q407 493 418 489L428 486M412 493Q430 488 439 485Q448 481 457 478Q466 474 475 470Q484 466 493 464L501 462M1154 786Q1165 813 1169 825Q1174 838 1178 850Q1182 863 1185 876L1189 888M1175 763Q1182 791 1185 806Q1188 821 1192 836Q1195 851 1197 865Q1199 880 1199 894L1199 908M409 499Q428 493 438 489Q448 484 458 480Q468 475 478 471Q488 467 497 464L507 462" stroke="#000000" stroke-width="4"/>
<path d="M643 512Q661 525 669 531Q678 538 684 545Q691 553 696 556Q701 560 704 560L708 560M479 489Q499 486 509 485Q519 484 528 485L538 485M580 489Q596 491 605 493L614 495" stroke="#b0b0b0" stroke-width="3"/>
<path d="M329 545Q348 531 358 525Q367 519 377 515Q386 511 396 509L405 506M233 653Q252 627 261 616L270 604M362 516Q382 506 393 503Q403 500 412 497Q422 495 432 491Q443 487 453 482L463 478M458 488Q478 480 487 478Q497 476 506 474L515 473M729 491Q738 484 744 479Q750 475 757 471L764 468" stroke="#282828" stroke-width="5"/>
<path d="M667 524Q681 535 687 541Q692 547 696 549L701 552M595 489Q615 492 625 497Q636 502 646 507L656 513" stroke="#a8a8a8" stroke-width="3"/>
<path d="M549 485Q564 487 572 486Q581 486 591 488L600 489M876 481Q899 485 911 489Q922 493 935 499Q947 504 960 511L972 518" stroke="#808080" stroke-width="5"/>
<path d="M959 519Q980 532 991 539Q1002 545 1013 553Q1024 561 1035 568L1045 576" stroke="#909090" stroke-width="5"/>
<path d="M1172 848Q1181 873 1184 885Q1188 897 1189 909Q1191 921 1191 934L1192 947M1184 810Q1190 836 1192 850Q1195 863 1195 875Q1196 888 1196 900L1196 913M197 677Q217 655 226 644Q236 633 246 622Q256 611 266 601Q275 591 285 582Q295 573 305 565L315 557M356 511Q373 503 382 500Q391 497 399 496Q408 494 417 493Q425 491 434 488Q443 484 452 481Q461 477 470 473L479 469M874 492Q902 497 916 501L930 505M1081 678Q1098 697 1106 708Q1115 718 1123 728Q1131 738 1138 748L1146 758" stroke="#101010" stroke-width="5"/>
<path d="M380 523Q400 515 409 513Q419 510 429 506Q438 503 448 499L458 495M1117 713Q1133 730 1140 739Q1147 747 1154 756Q1160 766 1165 777L1170 787M1134 751Q1146 776 1151 791Q1156 805 1160 819Q1164 832 1167 846Q1171 859 1174 872Q1177 886 1179 899L1180 912M1133 805Q1148 828 1154 837Q1160 846 1165 856L1171 866M569 470Q584 474 592 476Q601 479 610 482Q620 485 630 489Q640 494 651 499L661 504M789 480Q810 475 820 474Q830 472 839 470Q849 469 860 469L871 470M1046 580Q1067 595 1076 603Q1085 610 1094 618L1102 626M1128 712Q1142 735 1148 747Q1154 759 1159 775L1163 790M992 542Q1018 558 1031 567L1044 575M983 512Q1017 530 1035 540L1053 550" stroke="#383838" stroke-width="4"/>
<path d="M310 588Q328 574 336 567Q345 559 353 552Q362 544 371 539L379 533M441 516Q457 509 465 506Q474 503 482 501Q490 498 498 497L506 495M267 628Q285 611 294 603Q303 595 312 589Q322 583 331 577Q340 570 348 563Q357 556 366 550L375 544M263 632Q281 613 290 605Q299 596 308 589Q317 582 326 575Q336 568 344 560Q353 553 362 546Q371 539 380 534L389 528M535 490Q551 490 558 491Q566 491 576 490L585 489" stroke="#a0a0a0" stroke-width="4"/>
<path d="M330 577Q347 562 356 555Q364 547 373 541Q382 536 391 531Q400 526 408 523Q417 519 426 516Q435 512 443 508L452 505" stroke="#888888" stroke-width="5"/>
<path d="M499 478Q516 475 524 475Q533 474 541 475Q548 475 556 477L563 478M828 506Q846 503 855 502Q865 502 875 502Q885 501 895 503L906 505M810 496Q831 493 841 492Q851 492 861 493Q872 495 883 497Q894 499 906 503Q917 507 929 512L940 517" stroke="#909090" stroke-width="4"/>
</g>
</g>
<g filter="url(#b1)" fill="none" stroke-width="2.5">
<path d="M716 484 L722 560" stroke="#464646"/>
<path d="M724 478 L726 548" stroke="#3c3c3c"/>
<path d="M731 476 L729 540" stroke="#323232"/>
<path d="M700 535 L722 548" stroke="#5f5f5f"/>
<path d="M738 474 L733 530" stroke="#2d2d2d"/>
<path d="M745 470 L738 520" stroke="#282828"/>
</g>
<path d="M190 990 L190 754 L216 716 Q246 671 260 654 Q275 636 290 622 Q305 609 320 598 Q335 588 350 575 Q364 562 379 552 Q394 541 408 535 Q423 529 438 523 Q453 517 468 512 Q483 508 498 506 Q512 504 526 504 Q540 503 548 502 Q556 500 570 497 Q585 494 600 496 Q614 498 629 506 Q644 515 659 526 Q674 538 686 552 Q697 565 703 570 L709 575 Q721 562 727 556 Q733 550 748 544 Q763 538 778 532 Q792 527 809 524 Q826 520 840 522 Q855 525 870 530 Q885 535 900 542 Q915 550 930 558 Q944 565 959 576 Q974 586 988 599 Q1003 612 1012 620 Q1020 627 1030 639 Q1041 651 1051 664 Q1061 678 1071 694 Q1081 710 1092 730 Q1102 749 1112 768 Q1122 788 1130 813 Q1139 838 1145 858 Q1151 878 1155 898 Q1159 918 1161 938 Q1163 958 1164 972 L1165 985 L1165 990 Z" fill="#fff" filter="url(#b2)"/>
<path d="M1156 911h4v4h-4zM1159 971h4v4h-4zM1125 838h4v4h-4zM1141 900h4v4h-4zM1071 697h4v4h-4zM1148 976h4v4h-4zM1074 704h4v4h-4zM1133 828h4v4h-4zM1084 762h4v4h-4zM1146 883h4v4h-4z" fill="#dbdbdb"/>
<path d="M1100 751h4v4h-4zM1083 752h4v4h-4zM1089 728h4v4h-4zM1147 962h4v4h-4zM1141 847h4v4h-4zM1144 917h4v4h-4zM1094 740h4v4h-4zM1144 916h4v4h-4zM1153 939h4v4h-4zM1082 744h4v4h-4z" fill="#dadada"/>
<path d="M1137 855h4v4h-4zM1101 750h4v4h-4zM1076 707h4v4h-4zM1149 949h4v4h-4zM1130 831h4v4h-4zM1143 960h4v4h-4zM1090 730h4v4h-4zM1122 835h4v4h-4zM1147 961h4v4h-4zM1144 913h4v4h-4z" fill="#c1c1c1"/>
<path d="M1103 770h4v4h-4zM1086 763h4v4h-4zM1152 898h4v4h-4zM1160 980h4v4h-4zM1092 738h4v4h-4zM1142 897h4v4h-4zM1100 749h4v4h-4zM1096 746h4v4h-4zM1130 814h4v4h-4zM1113 799h4v4h-4z" fill="#bbbbbb"/>
<path d="M1146 896h4v4h-4zM1075 716h4v4h-4zM1061 706h4v4h-4zM1144 964h4v4h-4zM1099 751h4v4h-4zM1109 783h4v4h-4zM1157 925h4v4h-4zM1125 844h4v4h-4zM1141 930h4v4h-4zM1145 873h4v4h-4z" fill="#d2d2d2"/>
<path d="M1085 720h4v4h-4zM1099 748h4v4h-4zM1115 779h4v4h-4zM1117 797h4v4h-4zM1117 789h4v4h-4zM1073 731h4v4h-4zM1148 942h4v4h-4zM1124 838h4v4h-4zM1087 724h4v4h-4zM1129 811h4v4h-4z" fill="#b1b1b1"/>
<path d="M1143 873h4v4h-4zM1151 908h4v4h-4zM1161 949h4v4h-4zM1145 918h4v4h-4zM1114 802h4v4h-4zM1084 717h4v4h-4zM1137 895h4v4h-4zM1115 781h4v4h-4zM1085 723h4v4h-4zM1092 737h4v4h-4z" fill="#d0d0d0"/>
<path d="M1118 787h4v4h-4zM1147 869h4v4h-4zM1092 775h4v4h-4zM1106 778h4v4h-4zM1145 984h4v4h-4zM1150 917h4v4h-4zM1107 761h4v4h-4zM1086 722h4v4h-4zM1148 937h4v4h-4zM1091 759h4v4h-4z" fill="#b4b4b4"/>
<path d="M1082 749h4v4h-4zM1159 985h4v4h-4zM1151 886h4v4h-4zM1147 869h4v4h-4zM1152 898h4v4h-4zM1095 769h4v4h-4zM1127 857h4v4h-4zM1160 945h4v4h-4zM1121 790h4v4h-4zM1091 760h4v4h-4z" fill="#b9b9b9"/>
<path d="M1116 780h4v4h-4zM1150 927h4v4h-4zM1096 746h4v4h-4zM1148 972h4v4h-4zM1062 710h4v4h-4zM1087 738h4v4h-4zM1083 747h4v4h-4zM1158 929h4v4h-4zM1151 971h4v4h-4zM1156 911h4v4h-4z" fill="#afafaf"/>
<path d="M1162 961h4v4h-4zM1140 857h4v4h-4zM1072 716h4v4h-4zM1065 718h4v4h-4zM1074 709h4v4h-4zM1121 821h4v4h-4zM1155 980h4v4h-4zM1154 940h4v4h-4zM1153 930h4v4h-4zM1099 772h4v4h-4z" fill="#c1c1c1"/>
<path d="M1073 710h4v4h-4zM1148 936h4v4h-4zM1092 741h4v4h-4zM1133 894h4v4h-4zM1129 856h4v4h-4zM1139 879h4v4h-4zM1152 888h4v4h-4zM1144 935h4v4h-4zM1142 925h4v4h-4zM1099 765h4v4h-4z" fill="#d1d1d1"/>
<path d="M1154 961h4v4h-4zM1145 973h4v4h-4zM1068 712h4v4h-4zM1119 815h4v4h-4zM1156 931h4v4h-4zM1108 812h4v4h-4zM1095 763h4v4h-4zM1149 937h4v4h-4zM1157 966h4v4h-4zM1114 781h4v4h-4z" fill="#d3d3d3"/>
<path d="M1146 976h4v4h-4zM1134 842h4v4h-4zM1115 779h4v4h-4zM1145 862h4v4h-4zM1123 813h4v4h-4zM1072 704h4v4h-4zM1163 984h4v4h-4zM1158 963h4v4h-4zM1143 860h4v4h-4zM1095 759h4v4h-4z" fill="#c5c5c5"/>
<path d="M1158 964h4v4h-4zM1120 789h4v4h-4zM1093 742h4v4h-4zM1143 945h4v4h-4zM1160 977h4v4h-4zM1103 791h4v4h-4zM1150 936h4v4h-4zM1141 957h4v4h-4zM1128 810h4v4h-4zM1161 954h4v4h-4z" fill="#bdbdbd"/>
<path d="M1137 871h4v4h-4zM1147 921h4v4h-4zM1151 983h4v4h-4zM1148 925h4v4h-4zM1079 737h4v4h-4zM1105 767h4v4h-4zM1139 854h4v4h-4zM1109 770h4v4h-4zM1106 786h4v4h-4zM1136 908h4v4h-4z" fill="#e0e0e0"/>
<path d="M1070 714h4v4h-4zM1129 850h4v4h-4zM1058 708h4v4h-4zM1162 962h4v4h-4zM1124 806h4v4h-4zM1141 852h4v4h-4zM1145 882h4v4h-4zM1157 975h4v4h-4zM1055 707h4v4h-4zM1111 771h4v4h-4z" fill="#e6e6e6"/>
<path d="M1121 857h4v4h-4zM1089 746h4v4h-4zM1154 982h4v4h-4zM1095 768h4v4h-4zM1067 705h4v4h-4zM1130 816h4v4h-4zM1153 976h4v4h-4zM1120 852h4v4h-4zM1107 805h4v4h-4zM1105 792h4v4h-4z" fill="#cdcdcd"/>
<path d="M1071 710h4v4h-4zM1161 964h4v4h-4zM1160 940h4v4h-4zM1111 784h4v4h-4zM1137 906h4v4h-4zM1129 880h4v4h-4zM1155 932h4v4h-4zM1153 907h4v4h-4zM1156 964h4v4h-4zM1132 889h4v4h-4z" fill="#c7c7c7"/>
</g><rect x="513" y="500.5" width="20" height="4" fill="#2b2b2b"/><rect x="533" y="500.5" width="4" height="4" fill="#777"/></svg>

<div class="a" style="left:1394px;top:135px;width:17px;height:864px;background:#4b4b4b"></div>
<div class="a" style="left:1397px;top:382px;width:11px;height:130px;border-radius:6px;background:#6a6a6a"></div>
<div class="a" style="left:216px;top:981px;width:1178px;height:18px;background:#4a4a4a"></div>
<div class="a" style="left:282px;top:982px;width:200px;height:17px;background:#565656"></div>
<div class="a" style="left:216px;top:981px;width:1178px;height:1px;background:#444"></div>
<div class="t" id="zoomv" style="left:230px;top:985px;font-size:11px;color:#ececec">708.1%</div>
<div class="t" id="docinfo" style="left:307px;top:985px;font-size:11px;color:#d2d2d2">689 px x 1029 px (72 ppi)</div>
<svg style="left:471px;top:984px" width="7" height="12" viewBox="0 0 7 12"><path d="M1.5 1 L5.2 6 L1.5 11" fill="none" stroke="#d0d0d0" stroke-width="1.1"/></svg>
<div class="a" style="left:814px;top:984px;width:222px;height:11px;border-radius:6px;background:#6a6a6a"></div>
<div class="a" style="left:1394px;top:981px;width:17px;height:18px;background:#505050"></div>
<div class="a" style="left:1411px;top:103px;width:4px;height:896px;background:#464646"></div>


<div class="a" style="left:1415px;top:103px;width:334px;height:13px;background:#424242"></div>
<svg style="left:1732px;top:106px" width="9" height="7" viewBox="0 0 9 7"><path d="M0.8 0.8 L3.4 3.4 L0.8 6 M4.8 0.8 L7.4 3.4 L4.8 6" fill="none" stroke="#dadada" stroke-width="1.1"/></svg>
<div class="a" style="left:1415px;top:116px;width:334px;height:31px;background:#424242"></div>
<div class="a" style="left:1415px;top:115px;width:334px;height:2px;background:#3b3b3b"></div>
<div class="a" style="left:1415px;top:117px;width:77px;height:30px;background:#535353"></div>
<div class="a" style="left:1492px;top:146px;width:257px;height:1px;background:#3b3b3b"></div>
<div class="t" id="props" style="left:1424px;top:125px;font-size:12px;font-weight:bold;color:#f0f0f0">Properties</div>
<!-- scroll track -->
<div class="a" style="left:1731px;top:147px;width:18px;height:788px;background:#4a4a4a"></div>
<div class="a" style="left:1735px;top:151px;width:11.5px;height:562px;border-radius:6px;background:#6b6b6b"></div>
<div class="a" style="left:1747px;top:66px;width:2px;height:933px;background:#414141"></div>
<!-- View Mode fieldset -->
<div class="a" style="left:1427px;top:167px;width:293px;height:123px;border:1px solid #444"></div>
<div class="a" style="left:1442px;top:166px;width:68px;height:3px;background:#535353"></div>
<div class="t" id="vm" style="left:1447px;top:161px;font-size:11px;color:#e8e8e8">View Mode</div>
<div class="t" id="view" style="left:1438px;top:226px;font-size:11px;color:#dcdcdc">View</div>
<div class="a" style="left:1472px;top:210px;width:55px;height:44px;border:1px solid #666;border-radius:4px;background:#535353"></div>
<div class="a" style="left:1513px;top:211px;width:13px;height:42px;background:#464646;border-left:1px solid #666;border-radius:0 3px 3px 0"></div>
<svg style="left:1480.2px;top:213.1px" width="25.6" height="37" viewBox="0 0 25.6 37"><rect width="25.6" height="37" fill="#000"/><path d="M1.6 37 L2.4 31.2 Q2.6 29.6 3.2 29.1 L6.2 27.6 L4.2 26.6 Q2.6 25 2.1 23.5 Q3.6 23 4.7 22 Q3.4 20 3.7 18.4 Q4.6 16.8 6.2 15.9 Q7.2 13.8 8.8 12.8 Q9.8 11.9 10.8 11.8 Q12.8 11.6 14.4 12.6 Q15.8 13.4 16.4 14.9 Q17.2 17 17.4 19.5 Q17.8 21.6 18.4 23.5 Q18.6 25.2 19.5 26.1 Q21 27 22.5 27.6 Q23.8 28.6 24.5 30.1 Q25.4 31.6 25.6 33.2 L25.6 37 Z" fill="#fff"/></svg>
<svg style="left:1515.5px;top:230px" width="9" height="6" viewBox="0 0 9 6"><path d="M1 1 L4.5 4.5 L8 1" fill="none" stroke="#e4e4e4" stroke-width="1.2"/></svg>
<div class="cb" style="left:1555px;top:185px"></div><div class="t" id="c1" style="left:1574px;top:185px;font-size:11px;color:#e8e8e8">Show Edge (J)</div>
<div class="cb" style="left:1555px;top:213px"></div><div class="t" id="c2" style="left:1574px;top:213px;font-size:11px;color:#e8e8e8">Show Original (P)</div>
<div class="cb" style="left:1555px;top:240px;background:#777;border-color:#777"></div><svg style="left:1556px;top:241px" width="9" height="9" viewBox="0 0 9 9"><path d="M1.6 4.6 L3.7 6.8 L7.6 2" fill="none" stroke="#9a9a9a" stroke-width="1.5"/></svg><div class="t" id="c3" style="left:1574px;top:240px;font-size:11px;color:#858585">Real-time Refinement</div>
<div class="cb" style="left:1555px;top:267px"></div><div class="t" id="c4" style="left:1574px;top:267px;font-size:11px;color:#e8e8e8">High Quality Preview</div>
<div class="a" style="left:1415px;top:380px;width:316px;height:1px;background:#414141"></div>
<div class="t" id="preset" style="left:1428px;top:401px;font-size:11px;color:#dcdcdc">Preset</div>
<div class="a" style="left:1469px;top:397px;width:240px;height:20px;background:#454545;border:1px solid #626262;border-radius:3px"></div>
<div class="t" id="custom" style="left:1477px;top:401px;font-size:11px;color:#f0f0f0">Custom</div>
<svg style="left:1696px;top:404px" width="9" height="6" viewBox="0 0 9 6"><path d="M1 1 L4.5 4.5 L8 1" fill="none" stroke="#e4e4e4" stroke-width="1.2"/></svg>
<div class="cb" style="left:1426px;top:440px"></div><div class="t" id="rem" style="left:1445px;top:441px;font-size:11px;color:#e8e8e8">Remember Settings</div>
<div class="a" style="left:1415px;top:468px;width:316px;height:1px;background:#414141"></div>
<svg style="left:1425px;top:492px" width="11" height="7" viewBox="0 0 11 7"><path d="M1 1 L5.5 5.5 L10 1" fill="none" stroke="#d8d8d8" stroke-width="1.2"/></svg><div class="t" id="rm" style="left:1452px;top:491px;font-size:11px;color:#dcdcdc">Refine Mode</div>
<div class="a" style="left:1426px;top:523px;width:294px;height:25px;background:#454545;border:1px solid #626262;border-radius:3px"></div>
<div class="a" style="left:1569px;top:524px;width:150px;height:23px;background:#373737;border-left:1px solid #626262;border-radius:0 2px 2px 0"></div>
<div class="t" id="ca" style="left:1460px;top:529px;font-size:13px;color:#ededed">Color Aware</div>
<div class="t" id="oa" style="left:1604px;top:529px;font-size:13px;color:#f4f4f4">Object Aware</div>
<div class="a" style="left:1415px;top:558px;width:316px;height:1px;background:#414141"></div>
<svg style="left:1425px;top:582px" width="11" height="7" viewBox="0 0 11 7"><path d="M1 1 L5.5 5.5 L10 1" fill="none" stroke="#d8d8d8" stroke-width="1.2"/></svg><div class="t" id="ed" style="left:1452px;top:581px;font-size:11px;color:#dcdcdc">Edge Detection</div>
<div class="t" id="radius" style="left:1436px;top:628px;font-size:11px;color:#dcdcdc">Radius</div><div class="a" style="left:1631px;top:624px;width:66px;height:17px;background:#454545;border:1px solid #676767"></div><div class="t" style="left:1635px;top:628px;font-size:11px;color:#f0f0f0">0 px</div><div class="a" style="left:1449px;top:648px;width:248px;height:3px;background:#6f6f6f"></div><svg style="left:1439.4px;top:650.5px" width="14" height="15" viewBox="0 0 14 15"><path d="M7 1.2 L13.1 8.7 V11.6 Q13.1 13.4 11.3 13.4 H2.7 Q0.9 13.4 0.9 11.6 V8.7 Z" fill="#f0f0f0" stroke="#2a2a2a" stroke-width="1.2" stroke-linejoin="round"/></svg>
<div class="cb" style="left:1436px;top:686px"></div><div class="t" id="sr" style="left:1456px;top:687px;font-size:11px;color:#e8e8e8">Smart Radius</div>
<div class="a" style="left:1415px;top:714px;width:316px;height:1px;background:#414141"></div>
<svg style="left:1425px;top:739px" width="11" height="7" viewBox="0 0 11 7"><path d="M1 1 L5.5 5.5 L10 1" fill="none" stroke="#d8d8d8" stroke-width="1.2"/></svg><div class="t" id="gr" style="left:1452px;top:737px;font-size:11px;color:#dcdcdc">Global Refinements</div>
<div class="t" id="smooth" style="left:1436px;top:785px;font-size:11px;color:#dcdcdc">Smooth</div><div class="a" style="left:1631px;top:781px;width:66px;height:17px;background:#454545;border:1px solid #676767"></div><div class="t" style="left:1635px;top:785px;font-size:11px;color:#f0f0f0">0</div><div class="a" style="left:1449px;top:803px;width:248px;height:3px;background:#6f6f6f"></div><svg style="left:1439.4px;top:805.4px" width="14" height="15" viewBox="0 0 14 15"><path d="M7 1.2 L13.1 8.7 V11.6 Q13.1 13.4 11.3 13.4 H2.7 Q0.9 13.4 0.9 11.6 V8.7 Z" fill="#f0f0f0" stroke="#2a2a2a" stroke-width="1.2" stroke-linejoin="round"/></svg><div class="t" id="feather" style="left:1436px;top:849px;font-size:11px;color:#dcdcdc">Feather</div><div class="a" style="left:1631px;top:845px;width:66px;height:17px;background:#454545;border:1px solid #676767"></div><div class="t" style="left:1635px;top:849px;font-size:11px;color:#f0f0f0">0.0 px</div><div class="a" style="left:1449px;top:867px;width:248px;height:3px;background:#6f6f6f"></div><svg style="left:1439.4px;top:869.4px" width="14" height="15" viewBox="0 0 14 15"><path d="M7 1.2 L13.1 8.7 V11.6 Q13.1 13.4 11.3 13.4 H2.7 Q0.9 13.4 0.9 11.6 V8.7 Z" fill="#f0f0f0" stroke="#2a2a2a" stroke-width="1.2" stroke-linejoin="round"/></svg><div class="t" id="contrast" style="left:1436px;top:914px;font-size:11px;color:#dcdcdc">Contrast</div><div class="a" style="left:1631px;top:910px;width:66px;height:17px;background:#454545;border:1px solid #676767"></div><div class="t" style="left:1635px;top:914px;font-size:11px;color:#f0f0f0">0%</div><div class="a" style="left:1449px;top:932px;width:248px;height:3px;background:#6f6f6f"></div>
<!-- footer -->
<div class="a" style="left:1415px;top:934px;width:334px;height:65px;background:#535353"></div>
<div class="a" style="left:1415px;top:934px;width:334px;height:1px;background:#414141"></div>
<svg style="left:1434px;top:957px" width="23" height="20" viewBox="0 0 23 20"><path d="M6.6 9.8 A6.2 6.2 0 1 1 15.2 15.6" fill="none" stroke="#ececec" stroke-width="2.5"/><path d="M1.9 9.2 H11.1 L6.5 14.7 Z" fill="#ececec"/><path d="M1.9 17.5 H21" stroke="#ececec" stroke-width="1.6"/></svg>
<div class="a" style="left:1590px;top:953px;width:65px;height:28px;border:1px solid #7a7a7a;border-radius:14px"></div>
<div class="t" id="cancel" style="left:1601px;top:960px;font-size:14px;color:#f0f0f0">Cancel</div>
<div class="a" style="left:1665px;top:953px;width:66px;height:29px;border:1.5px solid #e2e2e2;border-radius:15px"></div>
<div class="t" id="ok" style="left:1689px;top:961px;font-size:14px;color:#f4f4f4">OK</div>
<div class="a" style="left:171px;top:998px;width:1578px;height:1px;background:#3e3e3e"></div>

</div>
</body></html>
